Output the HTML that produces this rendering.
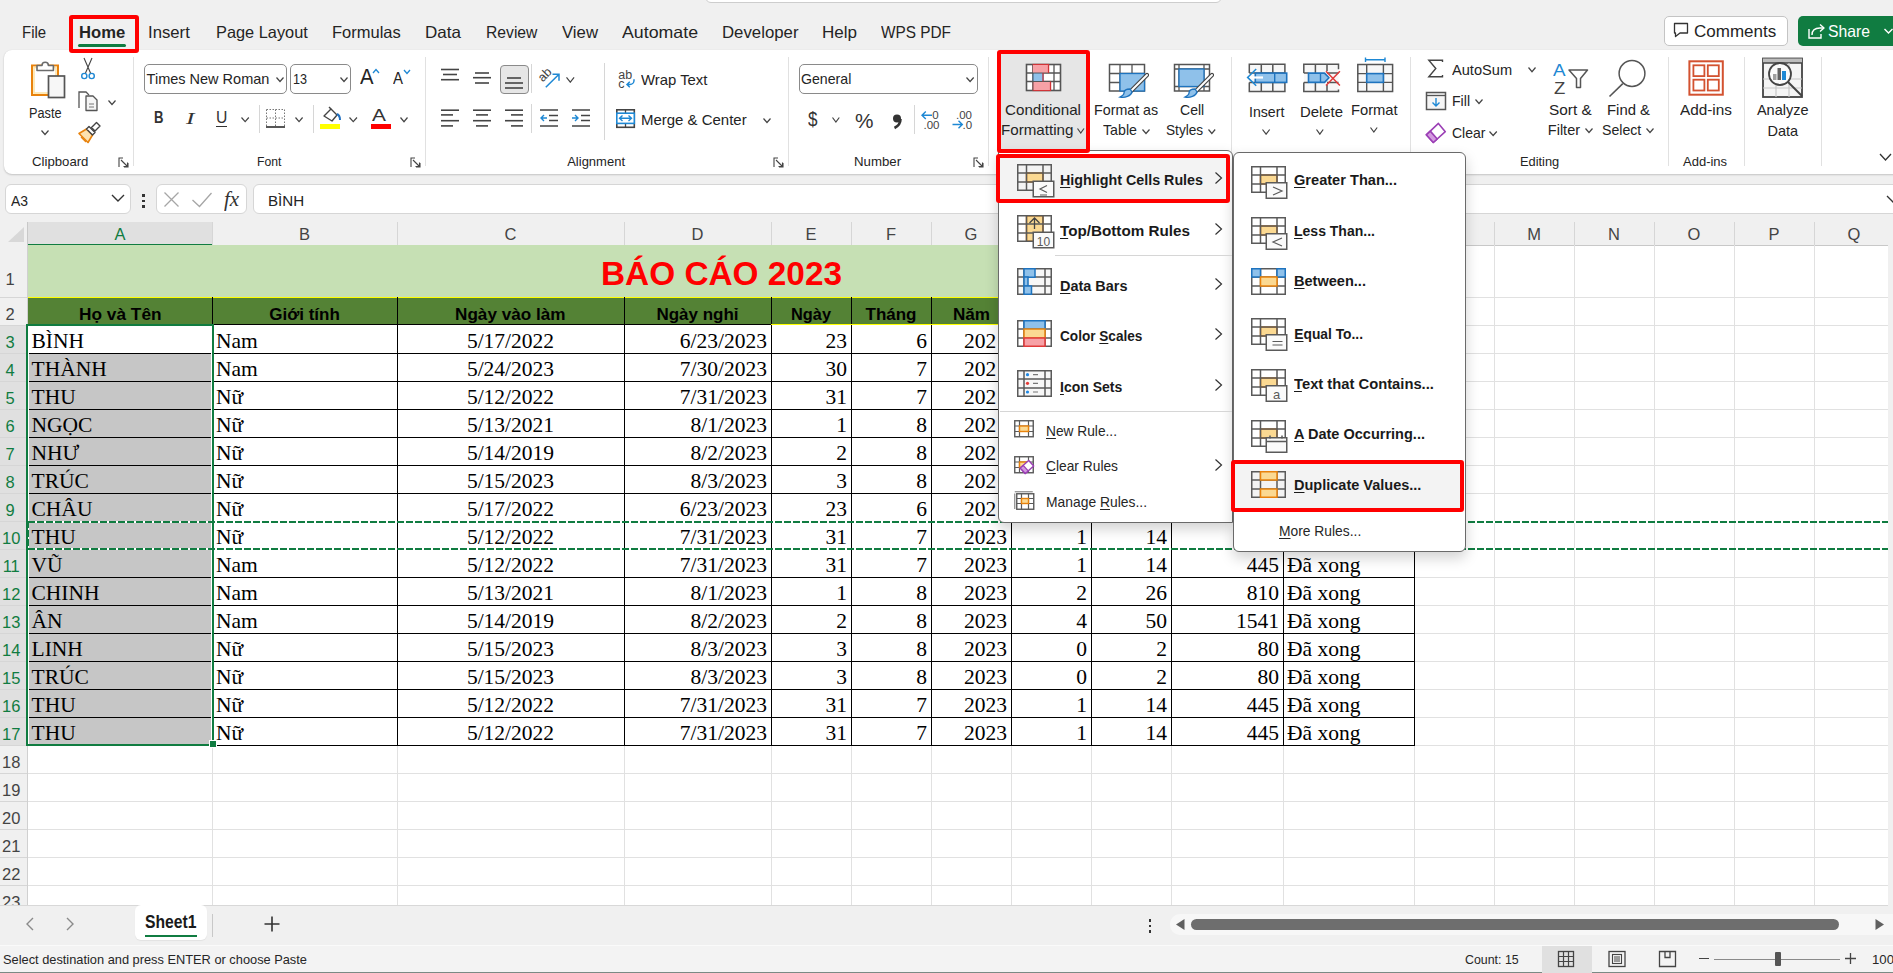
<!DOCTYPE html>
<html><head><meta charset="utf-8"><style>
html,body{margin:0;padding:0;}
body{width:1893px;height:973px;position:relative;overflow:hidden;background:#f0f0f0;font-family:"Liberation Sans",sans-serif;}
u{text-decoration:underline;text-underline-offset:2px;text-decoration-thickness:1px;}
</style></head><body>
<div style="position:absolute;left:0px;top:222px;width:1893px;height:683px;background:#ffffff;"></div>
<div style="position:absolute;left:0px;top:222px;width:1893px;height:23px;background:#f0f0f0;"></div>
<div style="position:absolute;left:0px;top:245px;width:1893px;height:1px;background:#c8c8c8;"></div>
<div style="position:absolute;left:27px;top:222px;width:1px;height:23px;background:#c8c8c8;"></div>
<div style="position:absolute;left:28px;top:222px;width:184px;height:23px;background:#e0e0e0;"></div>
<div style="position:absolute;left:28px;top:244px;width:184px;height:2px;background:#107c41;"></div>
<svg style="position:absolute;left:6px;top:226px;" width="18" height="16" viewBox="0 0 18 16"><path d="M18 1v15H2z" fill="#d8d8d8"/></svg>
<div style="position:absolute;top:225.97px;font-family:'Liberation Sans', sans-serif;font-size:16.5px;line-height:16.5px;color:#107c41;white-space:nowrap;left:114.50px;transform-origin:0 0;">A</div>
<div style="position:absolute;left:212px;top:222px;width:1px;height:23px;background:#d6d6d6;"></div>
<div style="position:absolute;top:225.97px;font-family:'Liberation Sans', sans-serif;font-size:16.5px;line-height:16.5px;color:#444;white-space:nowrap;left:299.00px;transform-origin:0 0;">B</div>
<div style="position:absolute;left:397px;top:222px;width:1px;height:23px;background:#d6d6d6;"></div>
<div style="position:absolute;top:225.97px;font-family:'Liberation Sans', sans-serif;font-size:16.5px;line-height:16.5px;color:#444;white-space:nowrap;left:504.55px;transform-origin:0 0;">C</div>
<div style="position:absolute;left:624px;top:222px;width:1px;height:23px;background:#d6d6d6;"></div>
<div style="position:absolute;top:225.97px;font-family:'Liberation Sans', sans-serif;font-size:16.5px;line-height:16.5px;color:#444;white-space:nowrap;left:691.55px;transform-origin:0 0;">D</div>
<div style="position:absolute;left:771px;top:222px;width:1px;height:23px;background:#d6d6d6;"></div>
<div style="position:absolute;top:225.97px;font-family:'Liberation Sans', sans-serif;font-size:16.5px;line-height:16.5px;color:#444;white-space:nowrap;left:805.50px;transform-origin:0 0;">E</div>
<div style="position:absolute;left:851px;top:222px;width:1px;height:23px;background:#d6d6d6;"></div>
<div style="position:absolute;top:225.97px;font-family:'Liberation Sans', sans-serif;font-size:16.5px;line-height:16.5px;color:#444;white-space:nowrap;left:885.95px;transform-origin:0 0;">F</div>
<div style="position:absolute;left:931px;top:222px;width:1px;height:23px;background:#d6d6d6;"></div>
<div style="position:absolute;top:225.97px;font-family:'Liberation Sans', sans-serif;font-size:16.5px;line-height:16.5px;color:#444;white-space:nowrap;left:964.60px;transform-origin:0 0;">G</div>
<div style="position:absolute;left:1011px;top:222px;width:1px;height:23px;background:#d6d6d6;"></div>
<div style="position:absolute;top:225.97px;font-family:'Liberation Sans', sans-serif;font-size:16.5px;line-height:16.5px;color:#444;white-space:nowrap;left:1045.05px;transform-origin:0 0;">H</div>
<div style="position:absolute;left:1091px;top:222px;width:1px;height:23px;background:#d6d6d6;"></div>
<div style="position:absolute;top:225.97px;font-family:'Liberation Sans', sans-serif;font-size:16.5px;line-height:16.5px;color:#444;white-space:nowrap;left:1128.70px;transform-origin:0 0;">I</div>
<div style="position:absolute;left:1171px;top:222px;width:1px;height:23px;background:#d6d6d6;"></div>
<div style="position:absolute;top:225.97px;font-family:'Liberation Sans', sans-serif;font-size:16.5px;line-height:16.5px;color:#444;white-space:nowrap;left:1222.85px;transform-origin:0 0;">J</div>
<div style="position:absolute;left:1283px;top:222px;width:1px;height:23px;background:#d6d6d6;"></div>
<div style="position:absolute;top:225.97px;font-family:'Liberation Sans', sans-serif;font-size:16.5px;line-height:16.5px;color:#444;white-space:nowrap;left:1343.00px;transform-origin:0 0;">K</div>
<div style="position:absolute;left:1414px;top:222px;width:1px;height:23px;background:#d6d6d6;"></div>
<div style="position:absolute;top:225.97px;font-family:'Liberation Sans', sans-serif;font-size:16.5px;line-height:16.5px;color:#444;white-space:nowrap;left:1449.40px;transform-origin:0 0;">L</div>
<div style="position:absolute;left:1494px;top:222px;width:1px;height:23px;background:#d6d6d6;"></div>
<div style="position:absolute;top:225.97px;font-family:'Liberation Sans', sans-serif;font-size:16.5px;line-height:16.5px;color:#444;white-space:nowrap;left:1527.15px;transform-origin:0 0;">M</div>
<div style="position:absolute;left:1574px;top:222px;width:1px;height:23px;background:#d6d6d6;"></div>
<div style="position:absolute;top:225.97px;font-family:'Liberation Sans', sans-serif;font-size:16.5px;line-height:16.5px;color:#444;white-space:nowrap;left:1608.05px;transform-origin:0 0;">N</div>
<div style="position:absolute;left:1654px;top:222px;width:1px;height:23px;background:#d6d6d6;"></div>
<div style="position:absolute;top:225.97px;font-family:'Liberation Sans', sans-serif;font-size:16.5px;line-height:16.5px;color:#444;white-space:nowrap;left:1687.60px;transform-origin:0 0;">O</div>
<div style="position:absolute;left:1734px;top:222px;width:1px;height:23px;background:#d6d6d6;"></div>
<div style="position:absolute;top:225.97px;font-family:'Liberation Sans', sans-serif;font-size:16.5px;line-height:16.5px;color:#444;white-space:nowrap;left:1768.50px;transform-origin:0 0;">P</div>
<div style="position:absolute;left:1814px;top:222px;width:1px;height:23px;background:#d6d6d6;"></div>
<div style="position:absolute;top:225.97px;font-family:'Liberation Sans', sans-serif;font-size:16.5px;line-height:16.5px;color:#444;white-space:nowrap;left:1847.60px;transform-origin:0 0;">Q</div>
<div style="position:absolute;left:0px;top:245px;width:27px;height:660px;background:#f0f0f0;"></div>
<div style="position:absolute;left:0px;top:325px;width:27px;height:420px;background:#e0e0e0;"></div>
<div style="position:absolute;left:27px;top:245px;width:1px;height:660px;background:#d0d0d0;"></div>
<div style="position:absolute;left:0px;top:297px;width:27px;height:1px;background:#d6d6d6;"></div>
<div style="position:absolute;top:271.48px;font-family:'Liberation Sans', sans-serif;font-size:16.5px;line-height:16.5px;color:#444;white-space:nowrap;left:5.60px;transform-origin:0 0;">1</div>
<div style="position:absolute;left:0px;top:325px;width:27px;height:1px;background:#d6d6d6;"></div>
<div style="position:absolute;top:305.98px;font-family:'Liberation Sans', sans-serif;font-size:16.5px;line-height:16.5px;color:#444;white-space:nowrap;left:5.60px;transform-origin:0 0;">2</div>
<div style="position:absolute;left:0px;top:353px;width:27px;height:1px;background:#d6d6d6;"></div>
<div style="position:absolute;top:333.98px;font-family:'Liberation Sans', sans-serif;font-size:16.5px;line-height:16.5px;color:#107c41;white-space:nowrap;left:5.60px;transform-origin:0 0;">3</div>
<div style="position:absolute;left:0px;top:381px;width:27px;height:1px;background:#d6d6d6;"></div>
<div style="position:absolute;top:361.98px;font-family:'Liberation Sans', sans-serif;font-size:16.5px;line-height:16.5px;color:#107c41;white-space:nowrap;left:5.60px;transform-origin:0 0;">4</div>
<div style="position:absolute;left:0px;top:409px;width:27px;height:1px;background:#d6d6d6;"></div>
<div style="position:absolute;top:389.98px;font-family:'Liberation Sans', sans-serif;font-size:16.5px;line-height:16.5px;color:#107c41;white-space:nowrap;left:5.60px;transform-origin:0 0;">5</div>
<div style="position:absolute;left:0px;top:437px;width:27px;height:1px;background:#d6d6d6;"></div>
<div style="position:absolute;top:417.98px;font-family:'Liberation Sans', sans-serif;font-size:16.5px;line-height:16.5px;color:#107c41;white-space:nowrap;left:5.60px;transform-origin:0 0;">6</div>
<div style="position:absolute;left:0px;top:465px;width:27px;height:1px;background:#d6d6d6;"></div>
<div style="position:absolute;top:445.98px;font-family:'Liberation Sans', sans-serif;font-size:16.5px;line-height:16.5px;color:#107c41;white-space:nowrap;left:5.60px;transform-origin:0 0;">7</div>
<div style="position:absolute;left:0px;top:493px;width:27px;height:1px;background:#d6d6d6;"></div>
<div style="position:absolute;top:473.98px;font-family:'Liberation Sans', sans-serif;font-size:16.5px;line-height:16.5px;color:#107c41;white-space:nowrap;left:5.60px;transform-origin:0 0;">8</div>
<div style="position:absolute;left:0px;top:521px;width:27px;height:1px;background:#d6d6d6;"></div>
<div style="position:absolute;top:501.98px;font-family:'Liberation Sans', sans-serif;font-size:16.5px;line-height:16.5px;color:#107c41;white-space:nowrap;left:5.60px;transform-origin:0 0;">9</div>
<div style="position:absolute;left:0px;top:549px;width:27px;height:1px;background:#d6d6d6;"></div>
<div style="position:absolute;top:529.98px;font-family:'Liberation Sans', sans-serif;font-size:16.5px;line-height:16.5px;color:#107c41;white-space:nowrap;left:2.00px;transform-origin:0 0;">10</div>
<div style="position:absolute;left:0px;top:577px;width:27px;height:1px;background:#d6d6d6;"></div>
<div style="position:absolute;top:557.98px;font-family:'Liberation Sans', sans-serif;font-size:16.5px;line-height:16.5px;color:#107c41;white-space:nowrap;left:2.65px;transform-origin:0 0;">11</div>
<div style="position:absolute;left:0px;top:605px;width:27px;height:1px;background:#d6d6d6;"></div>
<div style="position:absolute;top:585.98px;font-family:'Liberation Sans', sans-serif;font-size:16.5px;line-height:16.5px;color:#107c41;white-space:nowrap;left:2.00px;transform-origin:0 0;">12</div>
<div style="position:absolute;left:0px;top:633px;width:27px;height:1px;background:#d6d6d6;"></div>
<div style="position:absolute;top:613.98px;font-family:'Liberation Sans', sans-serif;font-size:16.5px;line-height:16.5px;color:#107c41;white-space:nowrap;left:2.00px;transform-origin:0 0;">13</div>
<div style="position:absolute;left:0px;top:661px;width:27px;height:1px;background:#d6d6d6;"></div>
<div style="position:absolute;top:641.98px;font-family:'Liberation Sans', sans-serif;font-size:16.5px;line-height:16.5px;color:#107c41;white-space:nowrap;left:2.00px;transform-origin:0 0;">14</div>
<div style="position:absolute;left:0px;top:689px;width:27px;height:1px;background:#d6d6d6;"></div>
<div style="position:absolute;top:669.98px;font-family:'Liberation Sans', sans-serif;font-size:16.5px;line-height:16.5px;color:#107c41;white-space:nowrap;left:2.00px;transform-origin:0 0;">15</div>
<div style="position:absolute;left:0px;top:717px;width:27px;height:1px;background:#d6d6d6;"></div>
<div style="position:absolute;top:697.98px;font-family:'Liberation Sans', sans-serif;font-size:16.5px;line-height:16.5px;color:#107c41;white-space:nowrap;left:2.00px;transform-origin:0 0;">16</div>
<div style="position:absolute;left:0px;top:745px;width:27px;height:1px;background:#d6d6d6;"></div>
<div style="position:absolute;top:725.98px;font-family:'Liberation Sans', sans-serif;font-size:16.5px;line-height:16.5px;color:#107c41;white-space:nowrap;left:2.00px;transform-origin:0 0;">17</div>
<div style="position:absolute;left:0px;top:773px;width:27px;height:1px;background:#d6d6d6;"></div>
<div style="position:absolute;top:753.98px;font-family:'Liberation Sans', sans-serif;font-size:16.5px;line-height:16.5px;color:#444;white-space:nowrap;left:2.00px;transform-origin:0 0;">18</div>
<div style="position:absolute;left:0px;top:801px;width:27px;height:1px;background:#d6d6d6;"></div>
<div style="position:absolute;top:781.98px;font-family:'Liberation Sans', sans-serif;font-size:16.5px;line-height:16.5px;color:#444;white-space:nowrap;left:2.00px;transform-origin:0 0;">19</div>
<div style="position:absolute;left:0px;top:829px;width:27px;height:1px;background:#d6d6d6;"></div>
<div style="position:absolute;top:809.98px;font-family:'Liberation Sans', sans-serif;font-size:16.5px;line-height:16.5px;color:#444;white-space:nowrap;left:2.00px;transform-origin:0 0;">20</div>
<div style="position:absolute;left:0px;top:857px;width:27px;height:1px;background:#d6d6d6;"></div>
<div style="position:absolute;top:837.98px;font-family:'Liberation Sans', sans-serif;font-size:16.5px;line-height:16.5px;color:#444;white-space:nowrap;left:2.00px;transform-origin:0 0;">21</div>
<div style="position:absolute;left:0px;top:885px;width:27px;height:1px;background:#d6d6d6;"></div>
<div style="position:absolute;top:865.98px;font-family:'Liberation Sans', sans-serif;font-size:16.5px;line-height:16.5px;color:#444;white-space:nowrap;left:2.00px;transform-origin:0 0;">22</div>
<div style="position:absolute;left:0px;top:913px;width:27px;height:1px;background:#d6d6d6;"></div>
<div style="position:absolute;top:893.98px;font-family:'Liberation Sans', sans-serif;font-size:16.5px;line-height:16.5px;color:#444;white-space:nowrap;left:2.00px;transform-origin:0 0;">23</div>
<div style="position:absolute;left:212px;top:245px;width:1px;height:660px;background:#e1e1e1;"></div>
<div style="position:absolute;left:397px;top:245px;width:1px;height:660px;background:#e1e1e1;"></div>
<div style="position:absolute;left:624px;top:245px;width:1px;height:660px;background:#e1e1e1;"></div>
<div style="position:absolute;left:771px;top:245px;width:1px;height:660px;background:#e1e1e1;"></div>
<div style="position:absolute;left:851px;top:245px;width:1px;height:660px;background:#e1e1e1;"></div>
<div style="position:absolute;left:931px;top:245px;width:1px;height:660px;background:#e1e1e1;"></div>
<div style="position:absolute;left:1011px;top:245px;width:1px;height:660px;background:#e1e1e1;"></div>
<div style="position:absolute;left:1091px;top:245px;width:1px;height:660px;background:#e1e1e1;"></div>
<div style="position:absolute;left:1171px;top:245px;width:1px;height:660px;background:#e1e1e1;"></div>
<div style="position:absolute;left:1283px;top:245px;width:1px;height:660px;background:#e1e1e1;"></div>
<div style="position:absolute;left:1414px;top:245px;width:1px;height:660px;background:#e1e1e1;"></div>
<div style="position:absolute;left:1494px;top:245px;width:1px;height:660px;background:#e1e1e1;"></div>
<div style="position:absolute;left:1574px;top:245px;width:1px;height:660px;background:#e1e1e1;"></div>
<div style="position:absolute;left:1654px;top:245px;width:1px;height:660px;background:#e1e1e1;"></div>
<div style="position:absolute;left:1734px;top:245px;width:1px;height:660px;background:#e1e1e1;"></div>
<div style="position:absolute;left:1814px;top:245px;width:1px;height:660px;background:#e1e1e1;"></div>
<div style="position:absolute;left:1894px;top:245px;width:1px;height:660px;background:#e1e1e1;"></div>
<div style="position:absolute;left:28px;top:297px;width:1866px;height:1px;background:#e1e1e1;"></div>
<div style="position:absolute;left:28px;top:325px;width:1866px;height:1px;background:#e1e1e1;"></div>
<div style="position:absolute;left:28px;top:353px;width:1866px;height:1px;background:#e1e1e1;"></div>
<div style="position:absolute;left:28px;top:381px;width:1866px;height:1px;background:#e1e1e1;"></div>
<div style="position:absolute;left:28px;top:409px;width:1866px;height:1px;background:#e1e1e1;"></div>
<div style="position:absolute;left:28px;top:437px;width:1866px;height:1px;background:#e1e1e1;"></div>
<div style="position:absolute;left:28px;top:465px;width:1866px;height:1px;background:#e1e1e1;"></div>
<div style="position:absolute;left:28px;top:493px;width:1866px;height:1px;background:#e1e1e1;"></div>
<div style="position:absolute;left:28px;top:521px;width:1866px;height:1px;background:#e1e1e1;"></div>
<div style="position:absolute;left:28px;top:549px;width:1866px;height:1px;background:#e1e1e1;"></div>
<div style="position:absolute;left:28px;top:577px;width:1866px;height:1px;background:#e1e1e1;"></div>
<div style="position:absolute;left:28px;top:605px;width:1866px;height:1px;background:#e1e1e1;"></div>
<div style="position:absolute;left:28px;top:633px;width:1866px;height:1px;background:#e1e1e1;"></div>
<div style="position:absolute;left:28px;top:661px;width:1866px;height:1px;background:#e1e1e1;"></div>
<div style="position:absolute;left:28px;top:689px;width:1866px;height:1px;background:#e1e1e1;"></div>
<div style="position:absolute;left:28px;top:717px;width:1866px;height:1px;background:#e1e1e1;"></div>
<div style="position:absolute;left:28px;top:745px;width:1866px;height:1px;background:#e1e1e1;"></div>
<div style="position:absolute;left:28px;top:773px;width:1866px;height:1px;background:#e1e1e1;"></div>
<div style="position:absolute;left:28px;top:801px;width:1866px;height:1px;background:#e1e1e1;"></div>
<div style="position:absolute;left:28px;top:829px;width:1866px;height:1px;background:#e1e1e1;"></div>
<div style="position:absolute;left:28px;top:857px;width:1866px;height:1px;background:#e1e1e1;"></div>
<div style="position:absolute;left:28px;top:885px;width:1866px;height:1px;background:#e1e1e1;"></div>
<div style="position:absolute;left:28px;top:245px;width:1386px;height:52px;background:#c6e0b4;"></div>
<div style="position:absolute;top:256.85px;font-family:'Liberation Sans', sans-serif;font-size:33px;line-height:33px;font-weight:bold;color:#ff0000;white-space:nowrap;left:601.00px;transform-origin:0 0;transform:scaleX(1.0109);">BÁO CÁO 2023</div>
<div style="position:absolute;left:28px;top:297px;width:1386px;height:28px;background:#548235;"></div>
<div style="position:absolute;left:28px;top:297px;width:1386px;height:1px;background:#ffff00;"></div>
<div style="position:absolute;top:306.05px;font-family:'Liberation Sans', sans-serif;font-size:17px;line-height:17px;font-weight:bold;color:#000;white-space:nowrap;left:78.75px;transform-origin:0 0;transform:scaleX(1.0160);">Họ và Tên</div>
<div style="position:absolute;top:306.05px;font-family:'Liberation Sans', sans-serif;font-size:17px;line-height:17px;font-weight:bold;color:#000;white-space:nowrap;left:269.20px;transform-origin:0 0;">Giới tính</div>
<div style="position:absolute;top:306.05px;font-family:'Liberation Sans', sans-serif;font-size:17px;line-height:17px;font-weight:bold;color:#000;white-space:nowrap;left:455.25px;transform-origin:0 0;transform:scaleX(1.0082);">Ngày vào làm</div>
<div style="position:absolute;top:306.05px;font-family:'Liberation Sans', sans-serif;font-size:17px;line-height:17px;font-weight:bold;color:#000;white-space:nowrap;left:656.40px;transform-origin:0 0;">Ngày nghỉ</div>
<div style="position:absolute;top:306.05px;font-family:'Liberation Sans', sans-serif;font-size:17px;line-height:17px;font-weight:bold;color:#000;white-space:nowrap;left:791.00px;transform-origin:0 0;transform:scaleX(0.9615);">Ngày</div>
<div style="position:absolute;top:306.05px;font-family:'Liberation Sans', sans-serif;font-size:17px;line-height:17px;font-weight:bold;color:#000;white-space:nowrap;left:865.50px;transform-origin:0 0;">Tháng</div>
<div style="position:absolute;top:306.05px;font-family:'Liberation Sans', sans-serif;font-size:17px;line-height:17px;font-weight:bold;color:#000;white-space:nowrap;left:952.50px;transform-origin:0 0;transform:scaleX(1.0054);">Năm</div>
<div style="position:absolute;top:306.05px;font-family:'Liberation Sans', sans-serif;font-size:17px;line-height:17px;font-weight:bold;color:#000;white-space:nowrap;left:1030.20px;transform-origin:0 0;">Ngày</div>
<div style="position:absolute;top:306.05px;font-family:'Liberation Sans', sans-serif;font-size:17px;line-height:17px;font-weight:bold;color:#000;white-space:nowrap;left:1111.35px;transform-origin:0 0;">Tuần</div>
<div style="position:absolute;top:306.05px;font-family:'Liberation Sans', sans-serif;font-size:17px;line-height:17px;font-weight:bold;color:#000;white-space:nowrap;left:1199.25px;transform-origin:0 0;">Lương</div>
<div style="position:absolute;top:306.05px;font-family:'Liberation Sans', sans-serif;font-size:17px;line-height:17px;font-weight:bold;color:#000;white-space:nowrap;left:1316.85px;transform-origin:0 0;">Ghi chú</div>
<div style="position:absolute;left:28px;top:325px;width:1386px;height:420px;background:#ffffff;"></div>
<div style="position:absolute;left:29px;top:353px;width:182px;height:392px;background:#c6c6c6;"></div>
<div style="position:absolute;left:212px;top:297px;width:1px;height:448px;background:#000;"></div>
<div style="position:absolute;left:397px;top:297px;width:1px;height:448px;background:#000;"></div>
<div style="position:absolute;left:624px;top:297px;width:1px;height:448px;background:#000;"></div>
<div style="position:absolute;left:771px;top:297px;width:1px;height:448px;background:#000;"></div>
<div style="position:absolute;left:851px;top:297px;width:1px;height:448px;background:#000;"></div>
<div style="position:absolute;left:931px;top:297px;width:1px;height:448px;background:#000;"></div>
<div style="position:absolute;left:1011px;top:297px;width:1px;height:448px;background:#000;"></div>
<div style="position:absolute;left:1091px;top:297px;width:1px;height:448px;background:#000;"></div>
<div style="position:absolute;left:1171px;top:297px;width:1px;height:448px;background:#000;"></div>
<div style="position:absolute;left:1283px;top:297px;width:1px;height:448px;background:#000;"></div>
<div style="position:absolute;left:1414px;top:297px;width:1px;height:449px;background:#000;"></div>
<div style="position:absolute;left:28px;top:353px;width:1387px;height:1px;background:#000;"></div>
<div style="position:absolute;left:28px;top:381px;width:1387px;height:1px;background:#000;"></div>
<div style="position:absolute;left:28px;top:409px;width:1387px;height:1px;background:#000;"></div>
<div style="position:absolute;left:28px;top:437px;width:1387px;height:1px;background:#000;"></div>
<div style="position:absolute;left:28px;top:465px;width:1387px;height:1px;background:#000;"></div>
<div style="position:absolute;left:28px;top:493px;width:1387px;height:1px;background:#000;"></div>
<div style="position:absolute;left:28px;top:521px;width:1387px;height:1px;background:#000;"></div>
<div style="position:absolute;left:28px;top:549px;width:1387px;height:1px;background:#000;"></div>
<div style="position:absolute;left:28px;top:577px;width:1387px;height:1px;background:#000;"></div>
<div style="position:absolute;left:28px;top:605px;width:1387px;height:1px;background:#000;"></div>
<div style="position:absolute;left:28px;top:633px;width:1387px;height:1px;background:#000;"></div>
<div style="position:absolute;left:28px;top:661px;width:1387px;height:1px;background:#000;"></div>
<div style="position:absolute;left:28px;top:689px;width:1387px;height:1px;background:#000;"></div>
<div style="position:absolute;left:28px;top:717px;width:1387px;height:1px;background:#000;"></div>
<div style="position:absolute;left:28px;top:745px;width:1387px;height:1px;background:#000;"></div>
<div style="position:absolute;left:28px;top:324px;width:743px;height:1px;background:#000;"></div>
<div style="position:absolute;left:771px;top:324px;width:643px;height:1px;background:#ffff00;"></div>
<div style="position:absolute;top:330.96px;font-family:'Liberation Serif', serif;font-size:21.5px;line-height:21.5px;color:#000;white-space:nowrap;left:31.50px;transform-origin:0 0;">BÌNH</div>
<div style="position:absolute;top:330.96px;font-family:'Liberation Serif', serif;font-size:21.5px;line-height:21.5px;color:#000;white-space:nowrap;left:216.00px;transform-origin:0 0;">Nam</div>
<div style="position:absolute;top:330.96px;font-family:'Liberation Serif', serif;font-size:21.5px;line-height:21.5px;color:#000;white-space:nowrap;left:466.90px;transform-origin:0 0;">5/17/2022</div>
<div style="position:absolute;top:330.96px;font-family:'Liberation Serif', serif;font-size:21.5px;line-height:21.5px;color:#000;white-space:nowrap;right:1126.00px;transform-origin:100% 0;">6/23/2023</div>
<div style="position:absolute;top:330.96px;font-family:'Liberation Serif', serif;font-size:21.5px;line-height:21.5px;color:#000;white-space:nowrap;right:1046.00px;transform-origin:100% 0;">23</div>
<div style="position:absolute;top:330.96px;font-family:'Liberation Serif', serif;font-size:21.5px;line-height:21.5px;color:#000;white-space:nowrap;right:966.05px;transform-origin:100% 0;">6</div>
<div style="position:absolute;top:330.96px;font-family:'Liberation Serif', serif;font-size:21.5px;line-height:21.5px;color:#000;white-space:nowrap;right:886.00px;transform-origin:100% 0;">2023</div>
<div style="position:absolute;top:358.96px;font-family:'Liberation Serif', serif;font-size:21.5px;line-height:21.5px;color:#000;white-space:nowrap;left:31.50px;transform-origin:0 0;">THÀNH</div>
<div style="position:absolute;top:358.96px;font-family:'Liberation Serif', serif;font-size:21.5px;line-height:21.5px;color:#000;white-space:nowrap;left:216.00px;transform-origin:0 0;">Nam</div>
<div style="position:absolute;top:358.96px;font-family:'Liberation Serif', serif;font-size:21.5px;line-height:21.5px;color:#000;white-space:nowrap;left:466.90px;transform-origin:0 0;">5/24/2023</div>
<div style="position:absolute;top:358.96px;font-family:'Liberation Serif', serif;font-size:21.5px;line-height:21.5px;color:#000;white-space:nowrap;right:1126.00px;transform-origin:100% 0;">7/30/2023</div>
<div style="position:absolute;top:358.96px;font-family:'Liberation Serif', serif;font-size:21.5px;line-height:21.5px;color:#000;white-space:nowrap;right:1046.00px;transform-origin:100% 0;">30</div>
<div style="position:absolute;top:358.96px;font-family:'Liberation Serif', serif;font-size:21.5px;line-height:21.5px;color:#000;white-space:nowrap;right:966.05px;transform-origin:100% 0;">7</div>
<div style="position:absolute;top:358.96px;font-family:'Liberation Serif', serif;font-size:21.5px;line-height:21.5px;color:#000;white-space:nowrap;right:886.00px;transform-origin:100% 0;">2023</div>
<div style="position:absolute;top:386.96px;font-family:'Liberation Serif', serif;font-size:21.5px;line-height:21.5px;color:#000;white-space:nowrap;left:31.50px;transform-origin:0 0;">THU</div>
<div style="position:absolute;top:386.96px;font-family:'Liberation Serif', serif;font-size:21.5px;line-height:21.5px;color:#000;white-space:nowrap;left:216.00px;transform-origin:0 0;">Nữ</div>
<div style="position:absolute;top:386.96px;font-family:'Liberation Serif', serif;font-size:21.5px;line-height:21.5px;color:#000;white-space:nowrap;left:466.90px;transform-origin:0 0;">5/12/2022</div>
<div style="position:absolute;top:386.96px;font-family:'Liberation Serif', serif;font-size:21.5px;line-height:21.5px;color:#000;white-space:nowrap;right:1126.00px;transform-origin:100% 0;">7/31/2023</div>
<div style="position:absolute;top:386.96px;font-family:'Liberation Serif', serif;font-size:21.5px;line-height:21.5px;color:#000;white-space:nowrap;right:1046.00px;transform-origin:100% 0;">31</div>
<div style="position:absolute;top:386.96px;font-family:'Liberation Serif', serif;font-size:21.5px;line-height:21.5px;color:#000;white-space:nowrap;right:966.05px;transform-origin:100% 0;">7</div>
<div style="position:absolute;top:386.96px;font-family:'Liberation Serif', serif;font-size:21.5px;line-height:21.5px;color:#000;white-space:nowrap;right:886.00px;transform-origin:100% 0;">2023</div>
<div style="position:absolute;top:414.96px;font-family:'Liberation Serif', serif;font-size:21.5px;line-height:21.5px;color:#000;white-space:nowrap;left:31.50px;transform-origin:0 0;">NGỌC</div>
<div style="position:absolute;top:414.96px;font-family:'Liberation Serif', serif;font-size:21.5px;line-height:21.5px;color:#000;white-space:nowrap;left:216.00px;transform-origin:0 0;">Nữ</div>
<div style="position:absolute;top:414.96px;font-family:'Liberation Serif', serif;font-size:21.5px;line-height:21.5px;color:#000;white-space:nowrap;left:466.90px;transform-origin:0 0;">5/13/2021</div>
<div style="position:absolute;top:414.96px;font-family:'Liberation Serif', serif;font-size:21.5px;line-height:21.5px;color:#000;white-space:nowrap;right:1125.95px;transform-origin:100% 0;">8/1/2023</div>
<div style="position:absolute;top:414.96px;font-family:'Liberation Serif', serif;font-size:21.5px;line-height:21.5px;color:#000;white-space:nowrap;right:1046.05px;transform-origin:100% 0;">1</div>
<div style="position:absolute;top:414.96px;font-family:'Liberation Serif', serif;font-size:21.5px;line-height:21.5px;color:#000;white-space:nowrap;right:966.05px;transform-origin:100% 0;">8</div>
<div style="position:absolute;top:414.96px;font-family:'Liberation Serif', serif;font-size:21.5px;line-height:21.5px;color:#000;white-space:nowrap;right:886.00px;transform-origin:100% 0;">2023</div>
<div style="position:absolute;top:442.96px;font-family:'Liberation Serif', serif;font-size:21.5px;line-height:21.5px;color:#000;white-space:nowrap;left:31.50px;transform-origin:0 0;">NHƯ</div>
<div style="position:absolute;top:442.96px;font-family:'Liberation Serif', serif;font-size:21.5px;line-height:21.5px;color:#000;white-space:nowrap;left:216.00px;transform-origin:0 0;">Nữ</div>
<div style="position:absolute;top:442.96px;font-family:'Liberation Serif', serif;font-size:21.5px;line-height:21.5px;color:#000;white-space:nowrap;left:466.90px;transform-origin:0 0;">5/14/2019</div>
<div style="position:absolute;top:442.96px;font-family:'Liberation Serif', serif;font-size:21.5px;line-height:21.5px;color:#000;white-space:nowrap;right:1125.95px;transform-origin:100% 0;">8/2/2023</div>
<div style="position:absolute;top:442.96px;font-family:'Liberation Serif', serif;font-size:21.5px;line-height:21.5px;color:#000;white-space:nowrap;right:1046.05px;transform-origin:100% 0;">2</div>
<div style="position:absolute;top:442.96px;font-family:'Liberation Serif', serif;font-size:21.5px;line-height:21.5px;color:#000;white-space:nowrap;right:966.05px;transform-origin:100% 0;">8</div>
<div style="position:absolute;top:442.96px;font-family:'Liberation Serif', serif;font-size:21.5px;line-height:21.5px;color:#000;white-space:nowrap;right:886.00px;transform-origin:100% 0;">2023</div>
<div style="position:absolute;top:470.96px;font-family:'Liberation Serif', serif;font-size:21.5px;line-height:21.5px;color:#000;white-space:nowrap;left:31.50px;transform-origin:0 0;">TRÚC</div>
<div style="position:absolute;top:470.96px;font-family:'Liberation Serif', serif;font-size:21.5px;line-height:21.5px;color:#000;white-space:nowrap;left:216.00px;transform-origin:0 0;">Nữ</div>
<div style="position:absolute;top:470.96px;font-family:'Liberation Serif', serif;font-size:21.5px;line-height:21.5px;color:#000;white-space:nowrap;left:466.90px;transform-origin:0 0;">5/15/2023</div>
<div style="position:absolute;top:470.96px;font-family:'Liberation Serif', serif;font-size:21.5px;line-height:21.5px;color:#000;white-space:nowrap;right:1125.95px;transform-origin:100% 0;">8/3/2023</div>
<div style="position:absolute;top:470.96px;font-family:'Liberation Serif', serif;font-size:21.5px;line-height:21.5px;color:#000;white-space:nowrap;right:1046.05px;transform-origin:100% 0;">3</div>
<div style="position:absolute;top:470.96px;font-family:'Liberation Serif', serif;font-size:21.5px;line-height:21.5px;color:#000;white-space:nowrap;right:966.05px;transform-origin:100% 0;">8</div>
<div style="position:absolute;top:470.96px;font-family:'Liberation Serif', serif;font-size:21.5px;line-height:21.5px;color:#000;white-space:nowrap;right:886.00px;transform-origin:100% 0;">2023</div>
<div style="position:absolute;top:498.95px;font-family:'Liberation Serif', serif;font-size:21.5px;line-height:21.5px;color:#000;white-space:nowrap;left:31.50px;transform-origin:0 0;">CHÂU</div>
<div style="position:absolute;top:498.95px;font-family:'Liberation Serif', serif;font-size:21.5px;line-height:21.5px;color:#000;white-space:nowrap;left:216.00px;transform-origin:0 0;">Nữ</div>
<div style="position:absolute;top:498.95px;font-family:'Liberation Serif', serif;font-size:21.5px;line-height:21.5px;color:#000;white-space:nowrap;left:466.90px;transform-origin:0 0;">5/17/2022</div>
<div style="position:absolute;top:498.95px;font-family:'Liberation Serif', serif;font-size:21.5px;line-height:21.5px;color:#000;white-space:nowrap;right:1126.00px;transform-origin:100% 0;">6/23/2023</div>
<div style="position:absolute;top:498.95px;font-family:'Liberation Serif', serif;font-size:21.5px;line-height:21.5px;color:#000;white-space:nowrap;right:1046.00px;transform-origin:100% 0;">23</div>
<div style="position:absolute;top:498.95px;font-family:'Liberation Serif', serif;font-size:21.5px;line-height:21.5px;color:#000;white-space:nowrap;right:966.05px;transform-origin:100% 0;">6</div>
<div style="position:absolute;top:498.95px;font-family:'Liberation Serif', serif;font-size:21.5px;line-height:21.5px;color:#000;white-space:nowrap;right:886.00px;transform-origin:100% 0;">2023</div>
<div style="position:absolute;top:526.95px;font-family:'Liberation Serif', serif;font-size:21.5px;line-height:21.5px;color:#000;white-space:nowrap;left:31.50px;transform-origin:0 0;">THU</div>
<div style="position:absolute;top:526.95px;font-family:'Liberation Serif', serif;font-size:21.5px;line-height:21.5px;color:#000;white-space:nowrap;left:216.00px;transform-origin:0 0;">Nữ</div>
<div style="position:absolute;top:526.95px;font-family:'Liberation Serif', serif;font-size:21.5px;line-height:21.5px;color:#000;white-space:nowrap;left:466.90px;transform-origin:0 0;">5/12/2022</div>
<div style="position:absolute;top:526.95px;font-family:'Liberation Serif', serif;font-size:21.5px;line-height:21.5px;color:#000;white-space:nowrap;right:1126.00px;transform-origin:100% 0;">7/31/2023</div>
<div style="position:absolute;top:526.95px;font-family:'Liberation Serif', serif;font-size:21.5px;line-height:21.5px;color:#000;white-space:nowrap;right:1046.00px;transform-origin:100% 0;">31</div>
<div style="position:absolute;top:526.95px;font-family:'Liberation Serif', serif;font-size:21.5px;line-height:21.5px;color:#000;white-space:nowrap;right:966.05px;transform-origin:100% 0;">7</div>
<div style="position:absolute;top:526.95px;font-family:'Liberation Serif', serif;font-size:21.5px;line-height:21.5px;color:#000;white-space:nowrap;right:886.00px;transform-origin:100% 0;">2023</div>
<div style="position:absolute;top:526.95px;font-family:'Liberation Serif', serif;font-size:21.5px;line-height:21.5px;color:#000;white-space:nowrap;right:806.05px;transform-origin:100% 0;">1</div>
<div style="position:absolute;top:526.95px;font-family:'Liberation Serif', serif;font-size:21.5px;line-height:21.5px;color:#000;white-space:nowrap;right:726.00px;transform-origin:100% 0;">14</div>
<div style="position:absolute;top:526.95px;font-family:'Liberation Serif', serif;font-size:21.5px;line-height:21.5px;color:#000;white-space:nowrap;right:614.05px;transform-origin:100% 0;">445</div>
<div style="position:absolute;top:526.95px;font-family:'Liberation Serif', serif;font-size:21.5px;line-height:21.5px;color:#000;white-space:nowrap;left:1287.00px;transform-origin:0 0;">Đã xong</div>
<div style="position:absolute;top:554.95px;font-family:'Liberation Serif', serif;font-size:21.5px;line-height:21.5px;color:#000;white-space:nowrap;left:31.50px;transform-origin:0 0;">VŨ</div>
<div style="position:absolute;top:554.95px;font-family:'Liberation Serif', serif;font-size:21.5px;line-height:21.5px;color:#000;white-space:nowrap;left:216.00px;transform-origin:0 0;">Nam</div>
<div style="position:absolute;top:554.95px;font-family:'Liberation Serif', serif;font-size:21.5px;line-height:21.5px;color:#000;white-space:nowrap;left:466.90px;transform-origin:0 0;">5/12/2022</div>
<div style="position:absolute;top:554.95px;font-family:'Liberation Serif', serif;font-size:21.5px;line-height:21.5px;color:#000;white-space:nowrap;right:1126.00px;transform-origin:100% 0;">7/31/2023</div>
<div style="position:absolute;top:554.95px;font-family:'Liberation Serif', serif;font-size:21.5px;line-height:21.5px;color:#000;white-space:nowrap;right:1046.00px;transform-origin:100% 0;">31</div>
<div style="position:absolute;top:554.95px;font-family:'Liberation Serif', serif;font-size:21.5px;line-height:21.5px;color:#000;white-space:nowrap;right:966.05px;transform-origin:100% 0;">7</div>
<div style="position:absolute;top:554.95px;font-family:'Liberation Serif', serif;font-size:21.5px;line-height:21.5px;color:#000;white-space:nowrap;right:886.00px;transform-origin:100% 0;">2023</div>
<div style="position:absolute;top:554.95px;font-family:'Liberation Serif', serif;font-size:21.5px;line-height:21.5px;color:#000;white-space:nowrap;right:806.05px;transform-origin:100% 0;">1</div>
<div style="position:absolute;top:554.95px;font-family:'Liberation Serif', serif;font-size:21.5px;line-height:21.5px;color:#000;white-space:nowrap;right:726.00px;transform-origin:100% 0;">14</div>
<div style="position:absolute;top:554.95px;font-family:'Liberation Serif', serif;font-size:21.5px;line-height:21.5px;color:#000;white-space:nowrap;right:614.05px;transform-origin:100% 0;">445</div>
<div style="position:absolute;top:554.95px;font-family:'Liberation Serif', serif;font-size:21.5px;line-height:21.5px;color:#000;white-space:nowrap;left:1287.00px;transform-origin:0 0;">Đã xong</div>
<div style="position:absolute;top:582.95px;font-family:'Liberation Serif', serif;font-size:21.5px;line-height:21.5px;color:#000;white-space:nowrap;left:31.50px;transform-origin:0 0;">CHINH</div>
<div style="position:absolute;top:582.95px;font-family:'Liberation Serif', serif;font-size:21.5px;line-height:21.5px;color:#000;white-space:nowrap;left:216.00px;transform-origin:0 0;">Nam</div>
<div style="position:absolute;top:582.95px;font-family:'Liberation Serif', serif;font-size:21.5px;line-height:21.5px;color:#000;white-space:nowrap;left:466.90px;transform-origin:0 0;">5/13/2021</div>
<div style="position:absolute;top:582.95px;font-family:'Liberation Serif', serif;font-size:21.5px;line-height:21.5px;color:#000;white-space:nowrap;right:1125.95px;transform-origin:100% 0;">8/1/2023</div>
<div style="position:absolute;top:582.95px;font-family:'Liberation Serif', serif;font-size:21.5px;line-height:21.5px;color:#000;white-space:nowrap;right:1046.05px;transform-origin:100% 0;">1</div>
<div style="position:absolute;top:582.95px;font-family:'Liberation Serif', serif;font-size:21.5px;line-height:21.5px;color:#000;white-space:nowrap;right:966.05px;transform-origin:100% 0;">8</div>
<div style="position:absolute;top:582.95px;font-family:'Liberation Serif', serif;font-size:21.5px;line-height:21.5px;color:#000;white-space:nowrap;right:886.00px;transform-origin:100% 0;">2023</div>
<div style="position:absolute;top:582.95px;font-family:'Liberation Serif', serif;font-size:21.5px;line-height:21.5px;color:#000;white-space:nowrap;right:806.05px;transform-origin:100% 0;">2</div>
<div style="position:absolute;top:582.95px;font-family:'Liberation Serif', serif;font-size:21.5px;line-height:21.5px;color:#000;white-space:nowrap;right:726.00px;transform-origin:100% 0;">26</div>
<div style="position:absolute;top:582.95px;font-family:'Liberation Serif', serif;font-size:21.5px;line-height:21.5px;color:#000;white-space:nowrap;right:614.05px;transform-origin:100% 0;">810</div>
<div style="position:absolute;top:582.95px;font-family:'Liberation Serif', serif;font-size:21.5px;line-height:21.5px;color:#000;white-space:nowrap;left:1287.00px;transform-origin:0 0;">Đã xong</div>
<div style="position:absolute;top:610.95px;font-family:'Liberation Serif', serif;font-size:21.5px;line-height:21.5px;color:#000;white-space:nowrap;left:31.50px;transform-origin:0 0;">ÂN</div>
<div style="position:absolute;top:610.95px;font-family:'Liberation Serif', serif;font-size:21.5px;line-height:21.5px;color:#000;white-space:nowrap;left:216.00px;transform-origin:0 0;">Nam</div>
<div style="position:absolute;top:610.95px;font-family:'Liberation Serif', serif;font-size:21.5px;line-height:21.5px;color:#000;white-space:nowrap;left:466.90px;transform-origin:0 0;">5/14/2019</div>
<div style="position:absolute;top:610.95px;font-family:'Liberation Serif', serif;font-size:21.5px;line-height:21.5px;color:#000;white-space:nowrap;right:1125.95px;transform-origin:100% 0;">8/2/2023</div>
<div style="position:absolute;top:610.95px;font-family:'Liberation Serif', serif;font-size:21.5px;line-height:21.5px;color:#000;white-space:nowrap;right:1046.05px;transform-origin:100% 0;">2</div>
<div style="position:absolute;top:610.95px;font-family:'Liberation Serif', serif;font-size:21.5px;line-height:21.5px;color:#000;white-space:nowrap;right:966.05px;transform-origin:100% 0;">8</div>
<div style="position:absolute;top:610.95px;font-family:'Liberation Serif', serif;font-size:21.5px;line-height:21.5px;color:#000;white-space:nowrap;right:886.00px;transform-origin:100% 0;">2023</div>
<div style="position:absolute;top:610.95px;font-family:'Liberation Serif', serif;font-size:21.5px;line-height:21.5px;color:#000;white-space:nowrap;right:806.05px;transform-origin:100% 0;">4</div>
<div style="position:absolute;top:610.95px;font-family:'Liberation Serif', serif;font-size:21.5px;line-height:21.5px;color:#000;white-space:nowrap;right:726.00px;transform-origin:100% 0;">50</div>
<div style="position:absolute;top:610.95px;font-family:'Liberation Serif', serif;font-size:21.5px;line-height:21.5px;color:#000;white-space:nowrap;right:614.00px;transform-origin:100% 0;">1541</div>
<div style="position:absolute;top:610.95px;font-family:'Liberation Serif', serif;font-size:21.5px;line-height:21.5px;color:#000;white-space:nowrap;left:1287.00px;transform-origin:0 0;">Đã xong</div>
<div style="position:absolute;top:638.95px;font-family:'Liberation Serif', serif;font-size:21.5px;line-height:21.5px;color:#000;white-space:nowrap;left:31.50px;transform-origin:0 0;">LINH</div>
<div style="position:absolute;top:638.95px;font-family:'Liberation Serif', serif;font-size:21.5px;line-height:21.5px;color:#000;white-space:nowrap;left:216.00px;transform-origin:0 0;">Nữ</div>
<div style="position:absolute;top:638.95px;font-family:'Liberation Serif', serif;font-size:21.5px;line-height:21.5px;color:#000;white-space:nowrap;left:466.90px;transform-origin:0 0;">5/15/2023</div>
<div style="position:absolute;top:638.95px;font-family:'Liberation Serif', serif;font-size:21.5px;line-height:21.5px;color:#000;white-space:nowrap;right:1125.95px;transform-origin:100% 0;">8/3/2023</div>
<div style="position:absolute;top:638.95px;font-family:'Liberation Serif', serif;font-size:21.5px;line-height:21.5px;color:#000;white-space:nowrap;right:1046.05px;transform-origin:100% 0;">3</div>
<div style="position:absolute;top:638.95px;font-family:'Liberation Serif', serif;font-size:21.5px;line-height:21.5px;color:#000;white-space:nowrap;right:966.05px;transform-origin:100% 0;">8</div>
<div style="position:absolute;top:638.95px;font-family:'Liberation Serif', serif;font-size:21.5px;line-height:21.5px;color:#000;white-space:nowrap;right:886.00px;transform-origin:100% 0;">2023</div>
<div style="position:absolute;top:638.95px;font-family:'Liberation Serif', serif;font-size:21.5px;line-height:21.5px;color:#000;white-space:nowrap;right:806.05px;transform-origin:100% 0;">0</div>
<div style="position:absolute;top:638.95px;font-family:'Liberation Serif', serif;font-size:21.5px;line-height:21.5px;color:#000;white-space:nowrap;right:726.05px;transform-origin:100% 0;">2</div>
<div style="position:absolute;top:638.95px;font-family:'Liberation Serif', serif;font-size:21.5px;line-height:21.5px;color:#000;white-space:nowrap;right:614.00px;transform-origin:100% 0;">80</div>
<div style="position:absolute;top:638.95px;font-family:'Liberation Serif', serif;font-size:21.5px;line-height:21.5px;color:#000;white-space:nowrap;left:1287.00px;transform-origin:0 0;">Đã xong</div>
<div style="position:absolute;top:666.95px;font-family:'Liberation Serif', serif;font-size:21.5px;line-height:21.5px;color:#000;white-space:nowrap;left:31.50px;transform-origin:0 0;">TRÚC</div>
<div style="position:absolute;top:666.95px;font-family:'Liberation Serif', serif;font-size:21.5px;line-height:21.5px;color:#000;white-space:nowrap;left:216.00px;transform-origin:0 0;">Nữ</div>
<div style="position:absolute;top:666.95px;font-family:'Liberation Serif', serif;font-size:21.5px;line-height:21.5px;color:#000;white-space:nowrap;left:466.90px;transform-origin:0 0;">5/15/2023</div>
<div style="position:absolute;top:666.95px;font-family:'Liberation Serif', serif;font-size:21.5px;line-height:21.5px;color:#000;white-space:nowrap;right:1125.95px;transform-origin:100% 0;">8/3/2023</div>
<div style="position:absolute;top:666.95px;font-family:'Liberation Serif', serif;font-size:21.5px;line-height:21.5px;color:#000;white-space:nowrap;right:1046.05px;transform-origin:100% 0;">3</div>
<div style="position:absolute;top:666.95px;font-family:'Liberation Serif', serif;font-size:21.5px;line-height:21.5px;color:#000;white-space:nowrap;right:966.05px;transform-origin:100% 0;">8</div>
<div style="position:absolute;top:666.95px;font-family:'Liberation Serif', serif;font-size:21.5px;line-height:21.5px;color:#000;white-space:nowrap;right:886.00px;transform-origin:100% 0;">2023</div>
<div style="position:absolute;top:666.95px;font-family:'Liberation Serif', serif;font-size:21.5px;line-height:21.5px;color:#000;white-space:nowrap;right:806.05px;transform-origin:100% 0;">0</div>
<div style="position:absolute;top:666.95px;font-family:'Liberation Serif', serif;font-size:21.5px;line-height:21.5px;color:#000;white-space:nowrap;right:726.05px;transform-origin:100% 0;">2</div>
<div style="position:absolute;top:666.95px;font-family:'Liberation Serif', serif;font-size:21.5px;line-height:21.5px;color:#000;white-space:nowrap;right:614.00px;transform-origin:100% 0;">80</div>
<div style="position:absolute;top:666.95px;font-family:'Liberation Serif', serif;font-size:21.5px;line-height:21.5px;color:#000;white-space:nowrap;left:1287.00px;transform-origin:0 0;">Đã xong</div>
<div style="position:absolute;top:694.95px;font-family:'Liberation Serif', serif;font-size:21.5px;line-height:21.5px;color:#000;white-space:nowrap;left:31.50px;transform-origin:0 0;">THU</div>
<div style="position:absolute;top:694.95px;font-family:'Liberation Serif', serif;font-size:21.5px;line-height:21.5px;color:#000;white-space:nowrap;left:216.00px;transform-origin:0 0;">Nữ</div>
<div style="position:absolute;top:694.95px;font-family:'Liberation Serif', serif;font-size:21.5px;line-height:21.5px;color:#000;white-space:nowrap;left:466.90px;transform-origin:0 0;">5/12/2022</div>
<div style="position:absolute;top:694.95px;font-family:'Liberation Serif', serif;font-size:21.5px;line-height:21.5px;color:#000;white-space:nowrap;right:1126.00px;transform-origin:100% 0;">7/31/2023</div>
<div style="position:absolute;top:694.95px;font-family:'Liberation Serif', serif;font-size:21.5px;line-height:21.5px;color:#000;white-space:nowrap;right:1046.00px;transform-origin:100% 0;">31</div>
<div style="position:absolute;top:694.95px;font-family:'Liberation Serif', serif;font-size:21.5px;line-height:21.5px;color:#000;white-space:nowrap;right:966.05px;transform-origin:100% 0;">7</div>
<div style="position:absolute;top:694.95px;font-family:'Liberation Serif', serif;font-size:21.5px;line-height:21.5px;color:#000;white-space:nowrap;right:886.00px;transform-origin:100% 0;">2023</div>
<div style="position:absolute;top:694.95px;font-family:'Liberation Serif', serif;font-size:21.5px;line-height:21.5px;color:#000;white-space:nowrap;right:806.05px;transform-origin:100% 0;">1</div>
<div style="position:absolute;top:694.95px;font-family:'Liberation Serif', serif;font-size:21.5px;line-height:21.5px;color:#000;white-space:nowrap;right:726.00px;transform-origin:100% 0;">14</div>
<div style="position:absolute;top:694.95px;font-family:'Liberation Serif', serif;font-size:21.5px;line-height:21.5px;color:#000;white-space:nowrap;right:614.05px;transform-origin:100% 0;">445</div>
<div style="position:absolute;top:694.95px;font-family:'Liberation Serif', serif;font-size:21.5px;line-height:21.5px;color:#000;white-space:nowrap;left:1287.00px;transform-origin:0 0;">Đã xong</div>
<div style="position:absolute;top:722.95px;font-family:'Liberation Serif', serif;font-size:21.5px;line-height:21.5px;color:#000;white-space:nowrap;left:31.50px;transform-origin:0 0;">THU</div>
<div style="position:absolute;top:722.95px;font-family:'Liberation Serif', serif;font-size:21.5px;line-height:21.5px;color:#000;white-space:nowrap;left:216.00px;transform-origin:0 0;">Nữ</div>
<div style="position:absolute;top:722.95px;font-family:'Liberation Serif', serif;font-size:21.5px;line-height:21.5px;color:#000;white-space:nowrap;left:466.90px;transform-origin:0 0;">5/12/2022</div>
<div style="position:absolute;top:722.95px;font-family:'Liberation Serif', serif;font-size:21.5px;line-height:21.5px;color:#000;white-space:nowrap;right:1126.00px;transform-origin:100% 0;">7/31/2023</div>
<div style="position:absolute;top:722.95px;font-family:'Liberation Serif', serif;font-size:21.5px;line-height:21.5px;color:#000;white-space:nowrap;right:1046.00px;transform-origin:100% 0;">31</div>
<div style="position:absolute;top:722.95px;font-family:'Liberation Serif', serif;font-size:21.5px;line-height:21.5px;color:#000;white-space:nowrap;right:966.05px;transform-origin:100% 0;">7</div>
<div style="position:absolute;top:722.95px;font-family:'Liberation Serif', serif;font-size:21.5px;line-height:21.5px;color:#000;white-space:nowrap;right:886.00px;transform-origin:100% 0;">2023</div>
<div style="position:absolute;top:722.95px;font-family:'Liberation Serif', serif;font-size:21.5px;line-height:21.5px;color:#000;white-space:nowrap;right:806.05px;transform-origin:100% 0;">1</div>
<div style="position:absolute;top:722.95px;font-family:'Liberation Serif', serif;font-size:21.5px;line-height:21.5px;color:#000;white-space:nowrap;right:726.00px;transform-origin:100% 0;">14</div>
<div style="position:absolute;top:722.95px;font-family:'Liberation Serif', serif;font-size:21.5px;line-height:21.5px;color:#000;white-space:nowrap;right:614.05px;transform-origin:100% 0;">445</div>
<div style="position:absolute;top:722.95px;font-family:'Liberation Serif', serif;font-size:21.5px;line-height:21.5px;color:#000;white-space:nowrap;left:1287.00px;transform-origin:0 0;">Đã xong</div>
<div style="position:absolute;left:1888px;top:222px;width:5px;height:683px;background:#f0f0f0;"></div>
<div style="position:absolute;left:28px;top:353px;width:1px;height:392px;background:#fff;"></div>
<div style="position:absolute;left:211px;top:353px;width:1px;height:392px;background:#fff;"></div>
<div style="position:absolute;left:995.5px;top:326px;width:2.5px;height:27px;background:#fff;"></div>
<div style="position:absolute;left:995.5px;top:354px;width:2.5px;height:27px;background:#fff;"></div>
<div style="position:absolute;left:995.5px;top:382px;width:2.5px;height:27px;background:#fff;"></div>
<div style="position:absolute;left:995.5px;top:410px;width:2.5px;height:27px;background:#fff;"></div>
<div style="position:absolute;left:995.5px;top:438px;width:2.5px;height:27px;background:#fff;"></div>
<div style="position:absolute;left:995.5px;top:466px;width:2.5px;height:27px;background:#fff;"></div>
<div style="position:absolute;left:995.5px;top:494px;width:2.5px;height:27px;background:#fff;"></div>
<div style="position:absolute;left:26px;top:324px;width:2px;height:422px;background:#107c41;"></div>
<div style="position:absolute;left:212px;top:324px;width:2px;height:418px;background:#107c41;"></div>
<div style="position:absolute;left:26px;top:324px;width:188px;height:2px;background:#107c41;"></div>
<div style="position:absolute;left:26px;top:744px;width:184px;height:2px;background:#107c41;"></div>
<div style="position:absolute;left:210px;top:741px;width:6px;height:6px;background:#107c41;box-shadow:0 0 0 1px #fff;"></div>
<div style="position:absolute;left:28px;top:521px;width:1860px;height:2px;background-image:repeating-linear-gradient(90deg,#107c41 0 7px,#fff 7px 9px);"></div>
<div style="position:absolute;left:28px;top:548px;width:1860px;height:2px;background-image:repeating-linear-gradient(90deg,#107c41 0 7px,#fff 7px 9px);"></div>
<div style="position:absolute;left:27.5px;top:521px;width:1.5px;height:29px;background-image:repeating-linear-gradient(180deg,#107c41 0 7px,#fff 7px 9px);"></div>
<div style="position:absolute;left:0px;top:905px;width:1893px;height:40px;background:#f0f0f0;"></div>
<div style="position:absolute;left:0px;top:904.5px;width:1888px;height:1px;background:#d8d8d8;"></div>
<div style="position:absolute;left:0px;top:945px;width:1893px;height:28px;background:#f3f3f3;border-top:1px solid #fafafa;box-sizing:border-box;"></div>
<div style="position:absolute;left:0px;top:972px;width:1893px;height:1px;background:#7a8a84;"></div>
<svg style="position:absolute;left:24px;top:916px;" width="12" height="16" viewBox="0 0 12 16"><path d="M9 2L3 8l6 6" fill="none" stroke="#8a8a8a" stroke-width="1.4"/></svg>
<svg style="position:absolute;left:64px;top:916px;" width="12" height="16" viewBox="0 0 12 16"><path d="M3 2l6 6-6 6" fill="none" stroke="#8a8a8a" stroke-width="1.4"/></svg>
<div style="position:absolute;left:135px;top:905px;width:72px;height:35px;background:#ffffff;border-radius:6px;box-shadow:0 1px 1px rgba(0,0,0,0.06);"></div>
<div style="position:absolute;top:913.73px;font-family:'Liberation Sans', sans-serif;font-size:17.5px;line-height:17.5px;font-weight:bold;color:#1a1a1a;white-space:nowrap;left:145.40px;transform-origin:0 0;transform:scaleX(0.8972);">Sheet1</div>
<div style="position:absolute;left:145px;top:934.5px;width:52px;height:2.5px;background:#107c41;"></div>
<div style="position:absolute;left:212px;top:913.5px;width:1px;height:23px;background:#c8c8c8;"></div>
<svg style="position:absolute;left:263px;top:915px;" width="18" height="18" viewBox="0 0 18 18"><path d="M9 1.5v15M1.5 9h15" fill="none" stroke="#333" stroke-width="1.6"/></svg>
<div style="position:absolute;left:1148.5px;top:919px;width:2.5px;height:2.5px;background:#333;"></div>
<div style="position:absolute;left:1148.5px;top:924.5px;width:2.5px;height:2.5px;background:#333;"></div>
<div style="position:absolute;left:1148.5px;top:930px;width:2.5px;height:2.5px;background:#333;"></div>
<div style="position:absolute;left:1170px;top:914px;width:723px;height:21px;background:#f7f7f7;border-radius:10px 0 0 10px;"></div>
<svg style="position:absolute;left:1175px;top:918px;" width="11" height="13" viewBox="0 0 11 13"><path d="M9.5 1v11L1 6.5z" fill="#606060"/></svg>
<div style="position:absolute;left:1191px;top:918.5px;width:648px;height:11.5px;background:#6e6e6e;border-radius:6px;"></div>
<svg style="position:absolute;left:1874px;top:918px;" width="11" height="13" viewBox="0 0 11 13"><path d="M1.5 1v11L10 6.5z" fill="#606060"/></svg>
<div style="position:absolute;top:952.65px;font-family:'Liberation Sans', sans-serif;font-size:13px;line-height:13px;color:#262626;white-space:nowrap;left:3.00px;transform-origin:0 0;transform:scaleX(0.9851);">Select destination and press ENTER or choose Paste</div>
<div style="position:absolute;top:952.85px;font-family:'Liberation Sans', sans-serif;font-size:13px;line-height:13px;color:#262626;white-space:nowrap;left:1464.50px;transform-origin:0 0;transform:scaleX(0.9521);">Count: 15</div>
<div style="position:absolute;left:1542px;top:946px;width:50px;height:27px;background:#e0e0e0;"></div>
<svg style="position:absolute;left:1556px;top:949px;" width="20" height="20" viewBox="0 0 20 20"><rect x="2.5" y="2.5" width="15" height="15" fill="none" stroke="#444" stroke-width="1.3"/><path d="M7.5 2.5v15M12.5 2.5v15M2.5 7.5h15M2.5 12.5h15" stroke="#444" stroke-width="1.2"/></svg>
<svg style="position:absolute;left:1607px;top:949px;" width="20" height="20" viewBox="0 0 20 20"><rect x="2" y="2.5" width="16" height="15" fill="none" stroke="#444" stroke-width="1.3"/><rect x="5.5" y="5.5" width="9" height="9" fill="none" stroke="#444" stroke-width="1.1"/><path d="M7 8h6M7 10h6M7 12h6" stroke="#444" stroke-width="1"/></svg>
<svg style="position:absolute;left:1657px;top:949px;" width="21" height="20" viewBox="0 0 21 20"><path d="M2.5 2.5h16v15h-16z" fill="none" stroke="#444" stroke-width="1.3"/><path d="M8 2.5v6h5v-6" fill="none" stroke="#444" stroke-width="1.3"/></svg>
<div style="position:absolute;left:1699px;top:958px;width:9.5px;height:1.3px;background:#444;"></div>
<div style="position:absolute;left:1714px;top:958.5px;width:126px;height:1px;background:#8a8a8a;"></div>
<div style="position:absolute;left:1775px;top:952px;width:6px;height:14px;background:#555;border-radius:1px;"></div>
<svg style="position:absolute;left:1844px;top:952px;" width="13" height="13" viewBox="0 0 13 13"><path d="M6.5 1v11M1 6.5h11" stroke="#444" stroke-width="1.3"/></svg>
<div style="position:absolute;top:952.85px;font-family:'Liberation Sans', sans-serif;font-size:13px;line-height:13px;color:#262626;white-space:nowrap;left:1871.60px;transform-origin:0 0;transform:scaleX(1.0138);">100</div>
<div style="position:absolute;left:705px;top:-20px;width:517px;height:23px;background:#fff;box-sizing:border-box;border:1.5px solid #cdcdcd;border-radius:0 0 6px 6px;"></div>
<div style="position:absolute;top:23.98px;font-family:'Liberation Sans', sans-serif;font-size:16.5px;line-height:16.5px;color:#242424;white-space:nowrap;left:21.50px;transform-origin:0 0;transform:scaleX(0.9060);">File</div>
<div style="position:absolute;top:23.98px;font-family:'Liberation Sans', sans-serif;font-size:16.5px;line-height:16.5px;font-weight:bold;color:#242424;white-space:nowrap;left:78.60px;transform-origin:0 0;transform:scaleX(1.0066);">Home</div>
<div style="position:absolute;top:23.98px;font-family:'Liberation Sans', sans-serif;font-size:16.5px;line-height:16.5px;color:#242424;white-space:nowrap;left:148.40px;transform-origin:0 0;transform:scaleX(1.0121);">Insert</div>
<div style="position:absolute;top:23.98px;font-family:'Liberation Sans', sans-serif;font-size:16.5px;line-height:16.5px;color:#242424;white-space:nowrap;left:215.50px;transform-origin:0 0;transform:scaleX(0.9903);">Page Layout</div>
<div style="position:absolute;top:23.98px;font-family:'Liberation Sans', sans-serif;font-size:16.5px;line-height:16.5px;color:#242424;white-space:nowrap;left:332.00px;transform-origin:0 0;">Formulas</div>
<div style="position:absolute;top:23.98px;font-family:'Liberation Sans', sans-serif;font-size:16.5px;line-height:16.5px;color:#242424;white-space:nowrap;left:425.00px;transform-origin:0 0;transform:scaleX(1.0315);">Data</div>
<div style="position:absolute;top:23.98px;font-family:'Liberation Sans', sans-serif;font-size:16.5px;line-height:16.5px;color:#242424;white-space:nowrap;left:485.50px;transform-origin:0 0;transform:scaleX(0.9502);">Review</div>
<div style="position:absolute;top:23.98px;font-family:'Liberation Sans', sans-serif;font-size:16.5px;line-height:16.5px;color:#242424;white-space:nowrap;left:562.00px;transform-origin:0 0;transform:scaleX(1.0141);">View</div>
<div style="position:absolute;top:23.98px;font-family:'Liberation Sans', sans-serif;font-size:16.5px;line-height:16.5px;color:#242424;white-space:nowrap;left:622.00px;transform-origin:0 0;transform:scaleX(1.0765);">Automate</div>
<div style="position:absolute;top:23.98px;font-family:'Liberation Sans', sans-serif;font-size:16.5px;line-height:16.5px;color:#242424;white-space:nowrap;left:721.50px;transform-origin:0 0;transform:scaleX(1.0173);">Developer</div>
<div style="position:absolute;top:23.98px;font-family:'Liberation Sans', sans-serif;font-size:16.5px;line-height:16.5px;color:#242424;white-space:nowrap;left:822.00px;transform-origin:0 0;transform:scaleX(1.0324);">Help</div>
<div style="position:absolute;top:23.98px;font-family:'Liberation Sans', sans-serif;font-size:16.5px;line-height:16.5px;color:#242424;white-space:nowrap;left:881.00px;transform-origin:0 0;transform:scaleX(0.9309);">WPS PDF</div>
<div style="position:absolute;left:78px;top:44px;width:48px;height:3px;background:#107c41;border-radius:2px;"></div>
<div style="position:absolute;left:1663.5px;top:16px;width:124px;height:29.5px;background:#fff;box-sizing:border-box;border:1px solid #c4c4c4;border-radius:5px;"></div>
<div style="position:absolute;top:22.58px;font-family:'Liberation Sans', sans-serif;font-size:16.5px;line-height:16.5px;color:#242424;white-space:nowrap;left:1693.60px;transform-origin:0 0;transform:scaleX(1.0301);">Comments</div>
<svg style="position:absolute;left:1672px;top:22px;" width="18" height="16" viewBox="0 0 18 16"><path d="M2.5 1.5h13v9.5h-7.5l-4.5 3.5v-3.5h-1z" fill="none" stroke="#333" stroke-width="1.3" stroke-linejoin="round"/></svg>
<div style="position:absolute;left:1798px;top:16px;width:110px;height:30px;background:#107c41;border-radius:5px;"></div>
<div style="position:absolute;top:22.77px;font-family:'Liberation Sans', sans-serif;font-size:16.5px;line-height:16.5px;color:#fff;white-space:nowrap;left:1828.20px;transform-origin:0 0;transform:scaleX(0.9545);">Share</div>
<svg style="position:absolute;left:1806px;top:21px;" width="20" height="20" viewBox="0 0 20 20"><path d="M3 8v9h12v-4" fill="none" stroke="#fff" stroke-width="1.4"/><path d="M6 14c0-5 3-7 8-7h3" fill="none" stroke="#fff" stroke-width="1.4"/><path d="M14 3.5l4 3.5-4 3.5" fill="none" stroke="#fff" stroke-width="1.4" stroke-linejoin="round"/></svg>
<svg style="position:absolute;left:1883px;top:26px;" width="12" height="10" viewBox="0 0 12 10"><path d="M1.5 3l4 4 4-4" fill="none" stroke="#fff" stroke-width="1.4"/></svg>
<div style="position:absolute;left:4px;top:50px;width:1900px;height:123.5px;background:#ffffff;border-radius:8px;box-shadow:0 1px 2px rgba(0,0,0,0.18),0 0 1px rgba(0,0,0,0.1);"></div>
<div style="position:absolute;left:1000.5px;top:53px;width:86px;height:96px;background:#e6e6e6;"></div>
<div style="position:absolute;left:132.5px;top:57px;width:1px;height:109px;background:#e1e1e1;"></div>
<div style="position:absolute;left:424.5px;top:57px;width:1px;height:109px;background:#e1e1e1;"></div>
<div style="position:absolute;left:787.5px;top:57px;width:1px;height:109px;background:#e1e1e1;"></div>
<div style="position:absolute;left:987.6px;top:57px;width:1px;height:109px;background:#e1e1e1;"></div>
<div style="position:absolute;left:1230.5px;top:57px;width:1px;height:109px;background:#e1e1e1;"></div>
<div style="position:absolute;left:1410.4px;top:57px;width:1px;height:109px;background:#e1e1e1;"></div>
<div style="position:absolute;left:1667.5px;top:57px;width:1px;height:109px;background:#e1e1e1;"></div>
<div style="position:absolute;left:1744.4px;top:57px;width:1px;height:109px;background:#e1e1e1;"></div>
<div style="position:absolute;left:1821.4px;top:57px;width:1px;height:109px;background:#e1e1e1;"></div>
<div style="position:absolute;top:154.75px;font-family:'Liberation Sans', sans-serif;font-size:13px;line-height:13px;color:#242424;white-space:nowrap;left:31.60px;transform-origin:0 0;transform:scaleX(1.0144);">Clipboard</div>
<div style="position:absolute;top:154.75px;font-family:'Liberation Sans', sans-serif;font-size:13px;line-height:13px;color:#242424;white-space:nowrap;left:256.50px;transform-origin:0 0;transform:scaleX(0.9385);">Font</div>
<div style="position:absolute;top:154.75px;font-family:'Liberation Sans', sans-serif;font-size:13px;line-height:13px;color:#242424;white-space:nowrap;left:567.20px;transform-origin:0 0;">Alignment</div>
<div style="position:absolute;top:154.75px;font-family:'Liberation Sans', sans-serif;font-size:13px;line-height:13px;color:#242424;white-space:nowrap;left:853.50px;transform-origin:0 0;transform:scaleX(1.0173);">Number</div>
<div style="position:absolute;top:154.75px;font-family:'Liberation Sans', sans-serif;font-size:13px;line-height:13px;color:#242424;white-space:nowrap;left:1519.50px;transform-origin:0 0;transform:scaleX(0.9874);">Editing</div>
<div style="position:absolute;top:154.75px;font-family:'Liberation Sans', sans-serif;font-size:13px;line-height:13px;color:#242424;white-space:nowrap;left:1683.00px;transform-origin:0 0;">Add-ins</div>
<svg style="position:absolute;left:118px;top:157px;" width="11" height="11" viewBox="0 0 11 11"><path d="M1 10V1h4M10 6v4H6M3 3l6.5 6.5M9.5 5.5v4h-4" fill="none" stroke="#444" stroke-width="1.1"/></svg>
<svg style="position:absolute;left:409.7px;top:157px;" width="11" height="11" viewBox="0 0 11 11"><path d="M1 10V1h4M10 6v4H6M3 3l6.5 6.5M9.5 5.5v4h-4" fill="none" stroke="#444" stroke-width="1.1"/></svg>
<svg style="position:absolute;left:773.4px;top:157px;" width="11" height="11" viewBox="0 0 11 11"><path d="M1 10V1h4M10 6v4H6M3 3l6.5 6.5M9.5 5.5v4h-4" fill="none" stroke="#444" stroke-width="1.1"/></svg>
<svg style="position:absolute;left:973px;top:157px;" width="11" height="11" viewBox="0 0 11 11"><path d="M1 10V1h4M10 6v4H6M3 3l6.5 6.5M9.5 5.5v4h-4" fill="none" stroke="#444" stroke-width="1.1"/></svg>
<svg style="position:absolute;left:1878px;top:152px;" width="15" height="10" viewBox="0 0 15 10"><path d="M2 2l5.5 6 5.5-6" fill="none" stroke="#333" stroke-width="1.3"/></svg>
<div style="position:absolute;left:4.5px;top:184px;width:126px;height:29.5px;background:#fff;box-sizing:border-box;border:1px solid #d6d6d6;border-radius:6px;"></div>
<div style="position:absolute;top:192.55px;font-family:'Liberation Sans', sans-serif;font-size:15px;line-height:15px;color:#242424;white-space:nowrap;left:11.00px;transform-origin:0 0;transform:scaleX(0.9290);">A3</div>
<svg style="position:absolute;left:110px;top:193px;" width="16" height="10" viewBox="0 0 16 10"><path d="M2 2l6 6 6-6" fill="none" stroke="#333" stroke-width="1.4"/></svg>
<div style="position:absolute;left:141.5px;top:194px;width:3px;height:2.5px;background:#333;"></div>
<div style="position:absolute;left:141.5px;top:199.5px;width:3px;height:2.5px;background:#333;"></div>
<div style="position:absolute;left:141.5px;top:205px;width:3px;height:2.5px;background:#333;"></div>
<div style="position:absolute;left:156px;top:184px;width:91px;height:29.5px;background:#fff;box-sizing:border-box;border:1px solid #d6d6d6;border-radius:6px;"></div>
<svg style="position:absolute;left:163px;top:191px;" width="18" height="17" viewBox="0 0 18 17"><path d="M1.5 1.5l14 14M15.5 1.5l-14 14" fill="none" stroke="#a6a6a6" stroke-width="1.3"/></svg>
<svg style="position:absolute;left:191px;top:191px;" width="22" height="17" viewBox="0 0 22 17"><path d="M1.5 9l7 6.5 12-13.5" fill="none" stroke="#a6a6a6" stroke-width="1.3"/></svg>
<div style="position:absolute;top:189.40px;font-family:'Liberation Serif', serif;font-size:20px;line-height:20px;color:#333;white-space:nowrap;left:223.50px;transform-origin:0 0;transform:scaleX(1.0479);font-style:italic;">fx</div>
<div style="position:absolute;left:253px;top:184px;width:1700px;height:29.5px;background:#fff;box-sizing:border-box;border:1px solid #d6d6d6;border-radius:6px;"></div>
<div style="position:absolute;top:192.55px;font-family:'Liberation Sans', sans-serif;font-size:15px;line-height:15px;color:#242424;white-space:nowrap;left:268.00px;transform-origin:0 0;transform:scaleX(1.0112);">BÌNH</div>
<svg style="position:absolute;left:1885px;top:194px;" width="16" height="10" viewBox="0 0 16 10"><path d="M2 2l6 6 6-6" fill="none" stroke="#333" stroke-width="1.3"/></svg>
<svg style="position:absolute;left:29px;top:58px;" width="40" height="42" viewBox="0 0 40 42"><rect x="3" y="7.5" width="26" height="29.5" fill="#fff" stroke="#e8820c" stroke-width="2"/><rect x="5" y="9.5" width="22" height="25.5" fill="none" stroke="#fde4a8" stroke-width="1.6"/><path d="M8 12.5V7.5h5a3.2 3.2 0 0 1 6.4 0h5v5z" fill="#fff" stroke="#6b6b6b" stroke-width="1.6" stroke-linejoin="round"/><rect x="19.5" y="18" width="16" height="21.5" fill="#f7f7f7" stroke="#555" stroke-width="1.7"/></svg>
<div style="position:absolute;top:105.60px;font-family:'Liberation Sans', sans-serif;font-size:14px;line-height:14px;color:#242424;white-space:nowrap;left:28.50px;transform-origin:0 0;transform:scaleX(0.9078);">Paste</div>
<svg style="position:absolute;left:39.5px;top:128.5px;" width="10" height="7" viewBox="0 0 10 7"><path d="M1.5 1.5L5.0 5.5L8.5 1.5" fill="none" stroke="#444" stroke-width="1.2"/></svg>
<svg style="position:absolute;left:80px;top:57px;" width="16" height="24" viewBox="0 0 16 24"><path d="M4 1l6.5 15M12 1L5.5 16" stroke="#444" stroke-width="1.1"/><circle cx="4.3" cy="19" r="2.6" fill="#fff" stroke="#1e88d4" stroke-width="1.4"/><circle cx="11.7" cy="19" r="2.6" fill="#fff" stroke="#1e88d4" stroke-width="1.4"/></svg>
<svg style="position:absolute;left:77px;top:90px;" width="24" height="22" viewBox="0 0 24 22"><path d="M2 18V2h7l3 3" fill="none" stroke="#555" stroke-width="1.3"/><path d="M9 6h7l4 4v10.5H9z" fill="#f5f5f5" stroke="#555" stroke-width="1.3" stroke-linejoin="round"/><path d="M12 14h5M12 17h5" stroke="#777" stroke-width="1"/></svg>
<svg style="position:absolute;left:106.5px;top:98.5px;" width="10" height="7" viewBox="0 0 10 7"><path d="M1.5 1.5L5.0 5.5L8.5 1.5" fill="none" stroke="#444" stroke-width="1.2"/></svg>
<svg style="position:absolute;left:76px;top:120px;" width="26" height="24" viewBox="0 0 26 24"><path d="M3 13.5l7.5-4.5 6 6-4.5 7.5z" fill="#fde2b0" stroke="#e8820c" stroke-width="1.6" stroke-linejoin="round"/><path d="M5 17l5 5" stroke="#e8820c" stroke-width="1.2"/><path d="M10.5 9l6 6 2.5-2.5-6-6z" fill="#fff" stroke="#444" stroke-width="1.4" stroke-linejoin="round"/><path d="M15.5 7.5l5-5 3.5 3.5-5 5z" fill="#fff" stroke="#444" stroke-width="1.4" stroke-linejoin="round"/></svg>
<div style="position:absolute;left:143.5px;top:63.8px;width:143px;height:30px;background:#fff;box-sizing:border-box;border:1px solid #8a8a8a;border-radius:5px;"></div>
<div style="position:absolute;top:72.17px;font-family:'Liberation Sans', sans-serif;font-size:14.5px;line-height:14.5px;color:#242424;white-space:nowrap;left:146.60px;transform-origin:0 0;">Times New Roman</div>
<svg style="position:absolute;left:274.5px;top:76.0px;" width="10" height="7.0" viewBox="0 0 10 7.0"><path d="M1.5 1.5L5.0 5.5L8.5 1.5" fill="none" stroke="#444" stroke-width="1.2"/></svg>
<div style="position:absolute;left:289.5px;top:63.8px;width:61px;height:30px;background:#fff;box-sizing:border-box;border:1px solid #8a8a8a;border-radius:5px;"></div>
<div style="position:absolute;top:72.17px;font-family:'Liberation Sans', sans-serif;font-size:14.5px;line-height:14.5px;color:#242424;white-space:nowrap;left:293.00px;transform-origin:0 0;transform:scaleX(0.8696);">13</div>
<svg style="position:absolute;left:338.5px;top:76.0px;" width="10" height="7.0" viewBox="0 0 10 7.0"><path d="M1.5 1.5L5.0 5.5L8.5 1.5" fill="none" stroke="#444" stroke-width="1.2"/></svg>
<div style="position:absolute;top:65.88px;font-family:'Liberation Sans', sans-serif;font-size:22.5px;line-height:22.5px;color:#242424;white-space:nowrap;left:359.50px;transform-origin:0 0;transform:scaleX(0.9000);">A</div>
<svg style="position:absolute;left:372px;top:68px;" width="8" height="6" viewBox="0 0 8 6"><path d="M1 5l3-3.5 3 3.5" fill="none" stroke="#1e88d4" stroke-width="1.3"/></svg>
<div style="position:absolute;top:71.40px;font-family:'Liberation Sans', sans-serif;font-size:16px;line-height:16px;color:#242424;white-space:nowrap;left:393.00px;transform-origin:0 0;transform:scaleX(0.9346);">A</div>
<svg style="position:absolute;left:403px;top:69px;" width="8" height="6" viewBox="0 0 8 6"><path d="M1 1l3 3.5 3-3.5" fill="none" stroke="#1e88d4" stroke-width="1.3"/></svg>
<div style="position:absolute;top:110.40px;font-family:'Liberation Sans', sans-serif;font-size:16px;line-height:16px;font-weight:bold;color:#333;white-space:nowrap;left:153.50px;transform-origin:0 0;transform:scaleX(0.8190);">B</div>
<div style="position:absolute;top:109.89px;font-family:'Liberation Serif', serif;font-size:17px;line-height:17px;color:#333;white-space:nowrap;left:185.50px;transform-origin:0 0;transform:scaleX(1.4912);font-style:italic;">I</div>
<div style="position:absolute;top:110.40px;font-family:'Liberation Sans', sans-serif;font-size:16px;line-height:16px;color:#333;white-space:nowrap;left:215.60px;transform-origin:0 0;transform:scaleX(0.9828);">U</div>
<div style="position:absolute;left:215.5px;top:125.5px;width:11.5px;height:1.4px;background:#333;"></div>
<svg style="position:absolute;left:240.2px;top:115.9px;" width="10.300000000000011" height="7.199999999999989" viewBox="0 0 10.300000000000011 7.199999999999989"><path d="M1.5 1.5L5.150000000000006 5.699999999999989L8.800000000000011 1.5" fill="none" stroke="#444" stroke-width="1.2"/></svg>
<div style="position:absolute;left:258.5px;top:105px;width:1px;height:28px;background:#d6d6d6;"></div>
<svg style="position:absolute;left:265px;top:108px;" width="21" height="21" viewBox="0 0 21 21"><path d="M1.5 1.5h18M1.5 1.5v17M19.5 1.5v17M10.5 1.5v17M1.5 10h18" fill="none" stroke="#777" stroke-width="1" stroke-dasharray="1.5 1.5"/><path d="M1 19h19" stroke="#444" stroke-width="1.8"/></svg>
<svg style="position:absolute;left:294.1px;top:115.9px;" width="10.099999999999966" height="7.199999999999989" viewBox="0 0 10.099999999999966 7.199999999999989"><path d="M1.5 1.5L5.049999999999983 5.699999999999989L8.599999999999966 1.5" fill="none" stroke="#444" stroke-width="1.2"/></svg>
<div style="position:absolute;left:312.5px;top:105px;width:1px;height:28px;background:#d6d6d6;"></div>
<svg style="position:absolute;left:319px;top:106px;" width="23" height="24" viewBox="0 0 23 24"><path d="M5 10l7-7 6 6-5 6z" fill="#fff" stroke="#444" stroke-width="1.4" stroke-linejoin="round"/><path d="M12 3l-2-2" stroke="#444" stroke-width="1.4"/><path d="M18 8c2 1 3 3 3 6" fill="none" stroke="#1e6fc0" stroke-width="2"/><rect x="1" y="18" width="20" height="5" fill="#ffff00"/></svg>
<svg style="position:absolute;left:348.0px;top:115.9px;" width="10.5" height="7.199999999999989" viewBox="0 0 10.5 7.199999999999989"><path d="M1.5 1.5L5.25 5.699999999999989L9.0 1.5" fill="none" stroke="#444" stroke-width="1.2"/></svg>
<div style="position:absolute;top:107.05px;font-family:'Liberation Sans', sans-serif;font-size:17px;line-height:17px;color:#333;white-space:nowrap;left:371.50px;transform-origin:0 0;transform:scaleX(1.2281);">A</div>
<div style="position:absolute;left:371px;top:124.2px;width:20px;height:4.6px;background:#ff0000;"></div>
<svg style="position:absolute;left:399.2px;top:115.9px;" width="10.0" height="7.199999999999989" viewBox="0 0 10.0 7.199999999999989"><path d="M1.5 1.5L5.0 5.699999999999989L8.5 1.5" fill="none" stroke="#444" stroke-width="1.2"/></svg>
<svg style="position:absolute;left:439px;top:60px;" width="22" height="72" viewBox="0 0 22 72"><path d="M2 9.5H20" stroke="#444" stroke-width="1.6"/><path d="M4 14.5H18" stroke="#444" stroke-width="1.6"/><path d="M2 19.7H20" stroke="#444" stroke-width="1.6"/></svg>
<svg style="position:absolute;left:471px;top:60px;" width="22" height="72" viewBox="0 0 22 72"><path d="M4 13H18" stroke="#444" stroke-width="1.6"/><path d="M2 17.7H20" stroke="#444" stroke-width="1.6"/><path d="M4 23H18" stroke="#444" stroke-width="1.6"/></svg>
<div style="position:absolute;left:499.5px;top:64.5px;width:29px;height:29px;background:#e6e6e6;box-sizing:border-box;border:1px solid #8a8a8a;border-radius:4px;"></div>
<svg style="position:absolute;left:503px;top:60px;" width="22" height="72" viewBox="0 0 22 72"><path d="M4 18H18" stroke="#444" stroke-width="1.6"/><path d="M2 23H20" stroke="#444" stroke-width="1.6"/><path d="M2 28H20" stroke="#444" stroke-width="1.6"/></svg>
<div style="position:absolute;left:531px;top:64px;width:1px;height:29px;background:#d6d6d6;"></div>
<svg style="position:absolute;left:536px;top:66px;" width="26" height="25" viewBox="0 0 26 25"><text x="1.5" y="14" font-family="Liberation Sans" font-size="12.5" fill="#444" transform="rotate(-45 7 9)">ab</text><path d="M9.8 21.3L23 8.2M16.5 8.2H23V14.7" fill="none" stroke="#1e88d4" stroke-width="1.5"/></svg>
<svg style="position:absolute;left:565.1px;top:75.5px;" width="10.600000000000023" height="7.700000000000003" viewBox="0 0 10.600000000000023 7.700000000000003"><path d="M1.5 1.5L5.300000000000011 6.200000000000003L9.100000000000023 1.5" fill="none" stroke="#444" stroke-width="1.2"/></svg>
<div style="position:absolute;left:603.5px;top:63px;width:1px;height:77px;background:#d6d6d6;"></div>
<svg style="position:absolute;left:617px;top:67px;" width="22" height="23" viewBox="0 0 22 23"><text x="1.3" y="11.9" font-family="Liberation Sans" font-size="12.5" fill="#444">ab</text><text x="1.3" y="20.7" font-family="Liberation Sans" font-size="12.5" fill="#444">c</text><path d="M17 12.3v1.2a4 4 0 0 1-4 4H10M12.8 14.7l-2.8 2.8 2.8 2.8" fill="none" stroke="#1e88d4" stroke-width="1.5"/></svg>
<div style="position:absolute;top:73.38px;font-family:'Liberation Sans', sans-serif;font-size:14.5px;line-height:14.5px;color:#242424;white-space:nowrap;left:641.30px;transform-origin:0 0;transform:scaleX(1.0263);">Wrap Text</div>
<svg style="position:absolute;left:439px;top:60px;" width="22" height="72" viewBox="0 0 22 72"><path d="M2 50.2H20" stroke="#444" stroke-width="1.6"/><path d="M2 54.9H14" stroke="#444" stroke-width="1.6"/><path d="M2 60.7H20" stroke="#444" stroke-width="1.6"/><path d="M2 65.9H14" stroke="#444" stroke-width="1.6"/></svg>
<svg style="position:absolute;left:471px;top:60px;" width="22" height="72" viewBox="0 0 22 72"><path d="M2 50.2H20" stroke="#444" stroke-width="1.6"/><path d="M5 54.9H17" stroke="#444" stroke-width="1.6"/><path d="M2 60.7H20" stroke="#444" stroke-width="1.6"/><path d="M5 65.9H17" stroke="#444" stroke-width="1.6"/></svg>
<svg style="position:absolute;left:503px;top:60px;" width="22" height="72" viewBox="0 0 22 72"><path d="M2 50.2H20" stroke="#444" stroke-width="1.6"/><path d="M8 54.9H20" stroke="#444" stroke-width="1.6"/><path d="M2 60.7H20" stroke="#444" stroke-width="1.6"/><path d="M8 65.9H20" stroke="#444" stroke-width="1.6"/></svg>
<div style="position:absolute;left:531px;top:104px;width:1px;height:29px;background:#d6d6d6;"></div>
<svg style="position:absolute;left:539px;top:108px;" width="21" height="20" viewBox="0 0 21 20"><path d="M1 2h18M10 7.5h9M10 12.5h9M1 18h18" stroke="#444" stroke-width="1.6"/><path d="M8 10H2M5 7l-3 3 3 3" fill="none" stroke="#1e88d4" stroke-width="1.4"/></svg>
<svg style="position:absolute;left:571px;top:108px;" width="21" height="20" viewBox="0 0 21 20"><path d="M1 2h18M10 7.5h9M10 12.5h9M1 18h18" stroke="#444" stroke-width="1.6"/><path d="M1 10h6M4 7l3 3-3 3" fill="none" stroke="#1e88d4" stroke-width="1.4"/></svg>
<svg style="position:absolute;left:615px;top:108px;" width="22" height="21" viewBox="0 0 22 21"><rect x="1.8" y="1.8" width="17.5" height="17.5" fill="#fff" stroke="#444" stroke-width="1.6"/><path d="M10.5 1.8v17.5" stroke="#444" stroke-width="1.3"/><rect x="1.8" y="5.2" width="17.5" height="10.2" fill="#fff" stroke="#1e88d4" stroke-width="1.6"/><path d="M4.5 10.3h12M7.5 7.5l-3 2.8 3 2.8M13.5 7.5l3 2.8-3 2.8" fill="none" stroke="#1e88d4" stroke-width="1.4"/></svg>
<div style="position:absolute;top:112.97px;font-family:'Liberation Sans', sans-serif;font-size:14.5px;line-height:14.5px;color:#242424;white-space:nowrap;left:641.30px;transform-origin:0 0;transform:scaleX(1.0323);">Merge &amp; Center</div>
<svg style="position:absolute;left:761.5px;top:116.5px;" width="10" height="7" viewBox="0 0 10 7"><path d="M1.5 1.5L5.0 5.5L8.5 1.5" fill="none" stroke="#444" stroke-width="1.2"/></svg>
<div style="position:absolute;left:798.5px;top:63.8px;width:179px;height:30px;background:#fff;box-sizing:border-box;border:1px solid #8a8a8a;border-radius:5px;"></div>
<div style="position:absolute;top:72.38px;font-family:'Liberation Sans', sans-serif;font-size:14.5px;line-height:14.5px;color:#242424;white-space:nowrap;left:801.00px;transform-origin:0 0;transform:scaleX(0.9748);">General</div>
<svg style="position:absolute;left:965.3px;top:76.0px;" width="10.200000000000045" height="7.0" viewBox="0 0 10.200000000000045 7.0"><path d="M1.5 1.5L5.100000000000023 5.5L8.700000000000045 1.5" fill="none" stroke="#444" stroke-width="1.2"/></svg>
<div style="position:absolute;top:108.45px;font-family:'Liberation Sans', sans-serif;font-size:21px;line-height:21px;color:#333;white-space:nowrap;left:807.50px;transform-origin:0 0;transform:scaleX(0.8120);">$</div>
<svg style="position:absolute;left:831.2px;top:115.8px;" width="9.799999999999955" height="7.5" viewBox="0 0 9.799999999999955 7.5"><path d="M1.5 1.5L4.899999999999977 6.0L8.299999999999955 1.5" fill="none" stroke="#444" stroke-width="1.2"/></svg>
<div style="position:absolute;top:110.70px;font-family:'Liberation Sans', sans-serif;font-size:20px;line-height:20px;color:#333;white-space:nowrap;left:855.00px;transform-origin:0 0;transform:scaleX(1.0393);">%</div>
<svg style="position:absolute;left:890px;top:112px;" width="14" height="18" viewBox="0 0 14 18"><circle cx="7" cy="6.5" r="4" fill="#333"/><path d="M10.5 7c0 4-2 7-6 9" fill="none" stroke="#333" stroke-width="2.6"/></svg>
<div style="position:absolute;left:913.5px;top:105px;width:1px;height:29px;background:#d6d6d6;"></div>
<svg style="position:absolute;left:920px;top:108px;" width="22" height="22" viewBox="0 0 22 22"><path d="M2 7.2h10M5.8 3.5L2 7.2 5.8 11" fill="none" stroke="#1e88d4" stroke-width="1.4"/><text x="12.3" y="11.2" font-family="Liberation Sans" font-size="11.5" fill="#444">0</text><text x="3.5" y="20.8" font-family="Liberation Sans" font-size="11.5" fill="#444">.00</text></svg>
<svg style="position:absolute;left:951px;top:108px;" width="23" height="22" viewBox="0 0 23 22"><text x="5" y="11.2" font-family="Liberation Sans" font-size="11.5" fill="#444">.00</text><path d="M1.5 16.5h10M7.5 12.8l3.8 3.7-3.8 3.7" fill="none" stroke="#1e88d4" stroke-width="1.4"/><text x="11.5" y="20.8" font-family="Liberation Sans" font-size="11.5" fill="#444">.0</text></svg>
<svg style="position:absolute;left:1025px;top:63px;" width="38" height="30" viewBox="0 0 38 30"><rect x="1.5" y="1.5" width="34" height="26" fill="#fff" stroke="#555" stroke-width="1.6"/><rect x="8" y="1.5" width="15.5" height="8" fill="#f7a1a6" stroke="#d13438" stroke-width="1.2"/><rect x="8" y="10" width="10" height="8.5" fill="#8fc1ea" stroke="#1e73be" stroke-width="1.2"/><rect x="8" y="18.5" width="17.5" height="9" fill="#f7a1a6" stroke="#d13438" stroke-width="1.2"/><path d="M8 1.5v26M29 1.5v26M1.5 10h34M1.5 18.5h34" stroke="#555" stroke-width="1.3" fill="none"/><rect x="8" y="1.5" width="15.5" height="8" fill="#f7a1a6"/><rect x="8.6" y="10.6" width="9" height="7.4" fill="#8fc1ea"/><rect x="8.6" y="19" width="16.5" height="8" fill="#f7a1a6"/><path d="M8 1.5h15.5v8.5M18 10v8.5M25.5 18.5v9" stroke="#d13438" stroke-width="1.2" fill="none"/></svg>
<div style="position:absolute;top:103.27px;font-family:'Liberation Sans', sans-serif;font-size:14.5px;line-height:14.5px;color:#242424;white-space:nowrap;left:1005.20px;transform-origin:0 0;transform:scaleX(1.0468);">Conditional</div>
<div style="position:absolute;top:122.67px;font-family:'Liberation Sans', sans-serif;font-size:14.5px;line-height:14.5px;color:#242424;white-space:nowrap;left:1000.60px;transform-origin:0 0;transform:scaleX(1.0447);">Formatting</div>
<svg style="position:absolute;left:1076.3px;top:126.5px;" width="9.5" height="7.5" viewBox="0 0 9.5 7.5"><path d="M1.5 1.5L4.75 6.0L8.0 1.5" fill="none" stroke="#444" stroke-width="1.2"/></svg>
<svg style="position:absolute;left:1108px;top:63px;" width="41" height="36" viewBox="0 0 41 36"><rect x="1.5" y="1.5" width="35" height="26.5" fill="#fff" stroke="#555" stroke-width="1.5"/><path d="M12 1.5v26.5M24 1.5v26.5M1.5 10.5h35M1.5 19.5h35" stroke="#555" stroke-width="1.3"/><rect x="12" y="10.5" width="24.5" height="17.5" fill="#8fc1ea" stroke="#1e73be" stroke-width="1.3"/><path d="M39 12L23 28" stroke="#444" stroke-width="4.2" stroke-linecap="round"/><path d="M39 12L23 28" stroke="#fff" stroke-width="2" stroke-linecap="round"/><path d="M22 26c-4 0-6 2-6 4s-2 3-4 4c5 1 11-1 12-5z" fill="#8fc1ea" stroke="#1e73be" stroke-width="1.3"/></svg>
<div style="position:absolute;top:103.47px;font-family:'Liberation Sans', sans-serif;font-size:14.5px;line-height:14.5px;color:#242424;white-space:nowrap;left:1094.20px;transform-origin:0 0;transform:scaleX(0.9832);">Format as</div>
<div style="position:absolute;top:123.48px;font-family:'Liberation Sans', sans-serif;font-size:14.5px;line-height:14.5px;color:#242424;white-space:nowrap;left:1102.70px;transform-origin:0 0;transform:scaleX(0.9798);">Table</div>
<svg style="position:absolute;left:1140.5px;top:127.5px;" width="10" height="7" viewBox="0 0 10 7"><path d="M1.5 1.5L5.0 5.5L8.5 1.5" fill="none" stroke="#444" stroke-width="1.2"/></svg>
<svg style="position:absolute;left:1173px;top:63px;" width="41" height="36" viewBox="0 0 41 36"><rect x="1.5" y="1.5" width="35" height="26.5" fill="#fff" stroke="#555" stroke-width="1.5"/><path d="M6 1.5v26.5M31 1.5v26.5M1.5 6h35M1.5 23.5h35" stroke="#555" stroke-width="1.3"/><rect x="6" y="6" width="25" height="17.5" fill="#8fc1ea" stroke="#1e73be" stroke-width="1.3"/><path d="M39 12L23 28" stroke="#444" stroke-width="4.2" stroke-linecap="round"/><path d="M39 12L23 28" stroke="#fff" stroke-width="2" stroke-linecap="round"/><path d="M22 26c-4 0-6 2-6 4s-2 3-4 4c5 1 11-1 12-5z" fill="#8fc1ea" stroke="#1e73be" stroke-width="1.3"/></svg>
<div style="position:absolute;top:103.47px;font-family:'Liberation Sans', sans-serif;font-size:14.5px;line-height:14.5px;color:#242424;white-space:nowrap;left:1180.20px;transform-origin:0 0;transform:scaleX(0.9680);">Cell</div>
<div style="position:absolute;top:123.48px;font-family:'Liberation Sans', sans-serif;font-size:14.5px;line-height:14.5px;color:#242424;white-space:nowrap;left:1166.40px;transform-origin:0 0;transform:scaleX(0.9418);">Styles</div>
<svg style="position:absolute;left:1207.4px;top:127.5px;" width="9.699999999999818" height="7" viewBox="0 0 9.699999999999818 7"><path d="M1.5 1.5L4.849999999999909 5.5L8.199999999999818 1.5" fill="none" stroke="#444" stroke-width="1.2"/></svg>
<svg style="position:absolute;left:1246px;top:63px;" width="44" height="31" viewBox="0 0 44 31"><rect x="3.3" y="1.3" width="35.6" height="27.3" fill="#f7f7f7"/><path d="M3.3 10.1V1.3H38.9V28.6H3.3V19.4M15.3 1.3V28.6M26.8 1.3V28.6M3.3 10.1H38.9M3.3 19.4H38.9" fill="none" stroke="#555" stroke-width="1.5"/><rect x="9.3" y="10.1" width="31.4" height="9.3" fill="#8fc1ea" stroke="#1e73be" stroke-width="1.6"/><path d="M28.7 10.1v9.3" stroke="#1e73be" stroke-width="1.4"/><path d="M2.5 14.5H17" stroke="#fff" stroke-width="2.2"/><path d="M10.2 6L1.6 14.4 10.2 22.8" fill="none" stroke="#1e88d4" stroke-width="1.5"/></svg>
<div style="position:absolute;top:105.27px;font-family:'Liberation Sans', sans-serif;font-size:14.5px;line-height:14.5px;color:#242424;white-space:nowrap;left:1249.20px;transform-origin:0 0;transform:scaleX(0.9752);">Insert</div>
<svg style="position:absolute;left:1261.3px;top:127.80000000000001px;" width="10.200000000000045" height="7.699999999999989" viewBox="0 0 10.200000000000045 7.699999999999989"><path d="M1.5 1.5L5.100000000000023 6.199999999999989L8.700000000000045 1.5" fill="none" stroke="#444" stroke-width="1.2"/></svg>
<svg style="position:absolute;left:1302px;top:63px;" width="42" height="31" viewBox="0 0 42 31"><rect x="1.8" y="1.3" width="34.7" height="27.3" fill="#f7f7f7"/><path d="M1.8 10.1V1.3H36.5V6.3M36.5 26.4V28.6H1.8V19.4M13.4 1.3V28.6M25 1.3V8M25 22V28.6M1.8 10.1H6.5M1.8 19.4H6.5M25 10.1H36.5M25 19.4H36.5" fill="none" stroke="#555" stroke-width="1.5"/><path d="M6.5 10.1H22.5L27 14.75 22.5 19.4H6.5Z" fill="#8fc1ea" stroke="#1e73be" stroke-width="1.6" stroke-linejoin="round"/><path d="M18.5 10.1v9.3" stroke="#1e73be" stroke-width="1.4"/><path d="M24 8.3L37.9 22.6M37.9 8.3L24 22.6" stroke="#e03a3a" stroke-width="1.5"/></svg>
<div style="position:absolute;top:105.27px;font-family:'Liberation Sans', sans-serif;font-size:14.5px;line-height:14.5px;color:#242424;white-space:nowrap;left:1299.50px;transform-origin:0 0;transform:scaleX(1.0263);">Delete</div>
<svg style="position:absolute;left:1315.3px;top:127.80000000000001px;" width="9.700000000000045" height="7.699999999999989" viewBox="0 0 9.700000000000045 7.699999999999989"><path d="M1.5 1.5L4.850000000000023 6.199999999999989L8.200000000000045 1.5" fill="none" stroke="#444" stroke-width="1.2"/></svg>
<svg style="position:absolute;left:1356px;top:57px;" width="39" height="36" viewBox="0 0 39 36"><path d="M9.5 2.7h19.5M9.5 0.5v4.5M29 0.5v4.5" stroke="#1e88d4" stroke-width="1.4"/><rect x="1.8" y="7.5" width="34.8" height="27" fill="#f7f7f7" stroke="#555" stroke-width="1.5"/><path d="M10.7 7.5v27M27.4 7.5v27M1.8 16.6h34.8M1.8 25.4h34.8" stroke="#555" stroke-width="1.4"/><rect x="10.7" y="16.6" width="16.7" height="8.8" fill="#8fc1ea" stroke="#1e73be" stroke-width="1.6"/></svg>
<div style="position:absolute;top:103.47px;font-family:'Liberation Sans', sans-serif;font-size:14.5px;line-height:14.5px;color:#242424;white-space:nowrap;left:1351.30px;transform-origin:0 0;transform:scaleX(1.0153);">Format</div>
<svg style="position:absolute;left:1369.3px;top:126.0px;" width="9.700000000000045" height="7.5" viewBox="0 0 9.700000000000045 7.5"><path d="M1.5 1.5L4.850000000000023 6.0L8.200000000000045 1.5" fill="none" stroke="#444" stroke-width="1.2"/></svg>
<svg style="position:absolute;left:1427px;top:59px;" width="18" height="20" viewBox="0 0 18 20"><path d="M15.5 3V1.2H1.8l7 8.3-7 8.3h13.7V16" fill="none" stroke="#444" stroke-width="1.4"/></svg>
<div style="position:absolute;top:62.88px;font-family:'Liberation Sans', sans-serif;font-size:14.5px;line-height:14.5px;color:#242424;white-space:nowrap;left:1451.50px;transform-origin:0 0;transform:scaleX(1.0067);">AutoSum</div>
<svg style="position:absolute;left:1526.5px;top:66.0px;" width="10" height="7.200000000000003" viewBox="0 0 10 7.200000000000003"><path d="M1.5 1.5L5.0 5.700000000000003L8.5 1.5" fill="none" stroke="#444" stroke-width="1.2"/></svg>
<svg style="position:absolute;left:1425px;top:91px;" width="22" height="20" viewBox="0 0 22 20"><rect x="1.5" y="1.5" width="19" height="17" fill="#f5f5f5" stroke="#555" stroke-width="1.5"/><path d="M1.5 4.5h19" stroke="#555" stroke-width="1.3"/><path d="M11 7v8M7.5 11.5L11 15l3.5-3.5" fill="none" stroke="#1e88d4" stroke-width="1.4"/></svg>
<div style="position:absolute;top:94.38px;font-family:'Liberation Sans', sans-serif;font-size:14.5px;line-height:14.5px;color:#242424;white-space:nowrap;left:1451.50px;transform-origin:0 0;transform:scaleX(0.9730);">Fill</div>
<svg style="position:absolute;left:1473.5px;top:97.5px;" width="10" height="7" viewBox="0 0 10 7"><path d="M1.5 1.5L5.0 5.5L8.5 1.5" fill="none" stroke="#444" stroke-width="1.2"/></svg>
<svg style="position:absolute;left:1425px;top:122px;" width="22" height="22" viewBox="0 0 22 22"><path d="M1.3 12.8L13.4 1.4 20.3 9.7 8.3 20.5Z" fill="#fff" stroke="#9b3fb5" stroke-width="1.6" stroke-linejoin="round"/><path d="M1.3 12.8L5.3 9.1 12.2 17 8.3 20.5Z" fill="#d49be0" stroke="#9b3fb5" stroke-width="1.6" stroke-linejoin="round"/></svg>
<div style="position:absolute;top:126.17px;font-family:'Liberation Sans', sans-serif;font-size:14.5px;line-height:14.5px;color:#242424;white-space:nowrap;left:1451.50px;transform-origin:0 0;transform:scaleX(0.9654);">Clear</div>
<svg style="position:absolute;left:1488.2px;top:129.5px;" width="10.299999999999955" height="7" viewBox="0 0 10.299999999999955 7"><path d="M1.5 1.5L5.149999999999977 5.5L8.799999999999955 1.5" fill="none" stroke="#444" stroke-width="1.2"/></svg>
<div style="position:absolute;top:61.85px;font-family:'Liberation Sans', sans-serif;font-size:17px;line-height:17px;color:#1e88d4;white-space:nowrap;left:1553.40px;transform-origin:0 0;transform:scaleX(1.1053);">A</div>
<div style="position:absolute;top:79.65px;font-family:'Liberation Sans', sans-serif;font-size:17px;line-height:17px;color:#444;white-space:nowrap;left:1553.70px;transform-origin:0 0;transform:scaleX(1.0865);">Z</div>
<svg style="position:absolute;left:1567px;top:68px;" width="23" height="22" viewBox="0 0 23 22"><path d="M2 2h18.5l-7 8.5v9h-4v-9z" fill="#fff" stroke="#555" stroke-width="1.5" stroke-linejoin="round"/></svg>
<div style="position:absolute;top:103.17px;font-family:'Liberation Sans', sans-serif;font-size:14.5px;line-height:14.5px;color:#242424;white-space:nowrap;left:1549.20px;transform-origin:0 0;transform:scaleX(1.0596);">Sort &amp;</div>
<div style="position:absolute;top:123.08px;font-family:'Liberation Sans', sans-serif;font-size:14.5px;line-height:14.5px;color:#242424;white-space:nowrap;left:1547.80px;transform-origin:0 0;">Filter</div>
<svg style="position:absolute;left:1583.5px;top:126.5px;" width="10" height="7" viewBox="0 0 10 7"><path d="M1.5 1.5L5.0 5.5L8.5 1.5" fill="none" stroke="#444" stroke-width="1.2"/></svg>
<svg style="position:absolute;left:1606px;top:58px;" width="42" height="41" viewBox="0 0 42 41"><circle cx="26" cy="15.5" r="12.9" fill="#fff" stroke="#555" stroke-width="1.5"/><path d="M16.8 25.6L3.5 38.5" stroke="#555" stroke-width="1.6"/></svg>
<div style="position:absolute;top:103.17px;font-family:'Liberation Sans', sans-serif;font-size:14.5px;line-height:14.5px;color:#242424;white-space:nowrap;left:1606.60px;transform-origin:0 0;transform:scaleX(1.0263);">Find &amp;</div>
<div style="position:absolute;top:123.08px;font-family:'Liberation Sans', sans-serif;font-size:14.5px;line-height:14.5px;color:#242424;white-space:nowrap;left:1601.50px;transform-origin:0 0;transform:scaleX(0.9752);">Select</div>
<svg style="position:absolute;left:1644.5px;top:126.5px;" width="10" height="7" viewBox="0 0 10 7"><path d="M1.5 1.5L5.0 5.5L8.5 1.5" fill="none" stroke="#444" stroke-width="1.2"/></svg>
<svg style="position:absolute;left:1687px;top:59px;" width="38" height="38" viewBox="0 0 38 38"><rect x="2.4" y="2.3" width="33.4" height="33.4" fill="#fff" stroke="#d35230" stroke-width="2"/><rect x="6.4" y="6.3" width="11" height="10.8" fill="none" stroke="#d35230" stroke-width="1.8"/><rect x="20.8" y="6.3" width="11" height="10.8" fill="none" stroke="#d35230" stroke-width="1.8"/><rect x="6.4" y="20.7" width="11" height="10.8" fill="none" stroke="#d35230" stroke-width="1.8"/><rect x="20.8" y="20.7" width="11" height="10.8" fill="none" stroke="#d35230" stroke-width="1.8"/></svg>
<div style="position:absolute;top:103.47px;font-family:'Liberation Sans', sans-serif;font-size:14.5px;line-height:14.5px;color:#242424;white-space:nowrap;left:1680.00px;transform-origin:0 0;transform:scaleX(1.0569);">Add-ins</div>
<svg style="position:absolute;left:1761px;top:57px;" width="43" height="42" viewBox="0 0 43 42"><rect x="2" y="1.5" width="39" height="38.5" fill="#f5f5f5" stroke="#444" stroke-width="1.8"/><rect x="2" y="1.5" width="39" height="4.5" fill="#bdbdbd"/><path d="M2 6h39" stroke="#444" stroke-width="1.3"/><path d="M2 22h39M2 31h39M15 6v34M28 6v34" stroke="#c8c8c8" stroke-width="1.2"/><circle cx="19" cy="17" r="11" fill="#fafafa" stroke="#444" stroke-width="1.8"/><path d="M27 25l14 14" stroke="#444" stroke-width="2"/><rect x="12" y="17" width="3.5" height="6" fill="#9e9e9e"/><rect x="16.5" y="11" width="3.5" height="12" fill="#616161"/><rect x="21" y="14" width="4" height="9" fill="#1e88d4"/></svg>
<div style="position:absolute;top:103.47px;font-family:'Liberation Sans', sans-serif;font-size:14.5px;line-height:14.5px;color:#242424;white-space:nowrap;left:1756.90px;transform-origin:0 0;">Analyze</div>
<div style="position:absolute;top:123.58px;font-family:'Liberation Sans', sans-serif;font-size:14.5px;line-height:14.5px;color:#242424;white-space:nowrap;left:1767.50px;transform-origin:0 0;">Data</div>
<div style="position:absolute;left:998px;top:150px;width:235px;height:373px;background:#ffffff;box-sizing:border-box;border:1px solid #6a6a6a;border-radius:0 6px 0 6px;box-shadow:0 6px 14px rgba(0,0,0,0.18);"></div>
<div style="position:absolute;left:1232.5px;top:152px;width:233px;height:399.5px;background:#ffffff;box-sizing:border-box;border:1px solid #6a6a6a;border-radius:6px;box-shadow:0 6px 14px rgba(0,0,0,0.18);"></div>
<div style="position:absolute;left:996.4px;top:154px;width:233.5px;height:49.3px;background:#f3f3f3;box-sizing:border-box;border:4px solid #ff0000;border-radius:3px;"></div>
<div style="position:absolute;left:1231.1px;top:460.4px;width:233.4px;height:51.5px;background:#f3f3f3;box-sizing:border-box;border:4px solid #ff0000;border-radius:3px;"></div>
<div style="position:absolute;left:997px;top:50px;width:93px;height:103px;box-sizing:border-box;border:4px solid #ff0000;border-radius:3px;"></div>
<div style="position:absolute;left:68.7px;top:14.9px;width:70px;height:37.8px;box-sizing:border-box;border:4px solid #ff0000;border-radius:3px;"></div>
<div style="position:absolute;top:173.67px;font-family:'Liberation Sans', sans-serif;font-size:13.8px;line-height:13.8px;font-weight:bold;color:#1a1a1a;white-space:nowrap;left:1060.30px;transform-origin:0 0;transform:scaleX(1.0362);"><u>H</u>ighlight Cells Rules</div>
<svg style="position:absolute;left:1016.5px;top:163.5px;" width="38" height="36" viewBox="0 0 38 36"><rect x="9.5" y="9" width="16.5" height="9" fill="#fbd992" stroke="#e8820c" stroke-width="1.5"/><rect x="0.75" y="0.75" width="33.5" height="25.5" fill="none" stroke="#5a5a5a" stroke-width="1.5"/><path d="M9.5 0.75V26.25" stroke="#5a5a5a" stroke-width="1.5"/><path d="M26 0.75V26.25" stroke="#5a5a5a" stroke-width="1.5"/><path d="M0.75 9H34.25" stroke="#5a5a5a" stroke-width="1.5"/><path d="M0.75 18H34.25" stroke="#5a5a5a" stroke-width="1.5"/><rect x="16.25" y="17.25" width="20.5" height="15.5" fill="#fafafa" stroke="#5a5a5a" stroke-width="1.5"/><path d="M30 21.5l-7 3.5 7 3.5M23 31h7" fill="none" stroke="#5a5a5a" stroke-width="1.2"/></svg>
<svg style="position:absolute;left:1214px;top:170.6px;" width="9" height="14" viewBox="0 0 9 14"><path d="M1.5 1.5l6 5.5-6 5.5" fill="none" stroke="#333" stroke-width="1.2"/></svg>
<div style="position:absolute;top:225.17px;font-family:'Liberation Sans', sans-serif;font-size:13.8px;line-height:13.8px;font-weight:bold;color:#1a1a1a;white-space:nowrap;left:1060.30px;transform-origin:0 0;transform:scaleX(1.1036);"><u>T</u>op/Bottom Rules</div>
<svg style="position:absolute;left:1016.5px;top:214.5px;" width="38" height="36" viewBox="0 0 38 36"><rect x="9.5" y="0.75" width="16.5" height="25.5" fill="#fbd992" stroke="#e8820c" stroke-width="1.5"/><rect x="0.75" y="0.75" width="33.5" height="25.5" fill="none" stroke="#5a5a5a" stroke-width="1.5"/><path d="M9.5 0.75V26.25" stroke="#5a5a5a" stroke-width="1.5"/><path d="M26 0.75V26.25" stroke="#5a5a5a" stroke-width="1.5"/><path d="M0.75 9H34.25" stroke="#5a5a5a" stroke-width="1.5"/><path d="M0.75 18H34.25" stroke="#5a5a5a" stroke-width="1.5"/><path d="M17.5 14V3M12.5 8l5-5 5 5" fill="none" stroke="#444" stroke-width="1.3"/><rect x="16.25" y="17.25" width="20.5" height="15.5" fill="#fafafa" stroke="#5a5a5a" stroke-width="1.5"/><text x="26.5" y="30.5" font-family="Liberation Sans" font-size="12" text-anchor="middle" fill="#5a5a5a">10</text></svg>
<svg style="position:absolute;left:1214px;top:222.1px;" width="9" height="14" viewBox="0 0 9 14"><path d="M1.5 1.5l6 5.5-6 5.5" fill="none" stroke="#333" stroke-width="1.2"/></svg>
<div style="position:absolute;top:279.87px;font-family:'Liberation Sans', sans-serif;font-size:13.8px;line-height:13.8px;font-weight:bold;color:#1a1a1a;white-space:nowrap;left:1060.30px;transform-origin:0 0;transform:scaleX(1.0481);"><u>D</u>ata Bars</div>
<svg style="position:absolute;left:1016.5px;top:268px;" width="38" height="36" viewBox="0 0 38 36"><rect x="0.75" y="0.75" width="33.5" height="25.5" fill="#f7f7f7"/><rect x="0.75" y="0.75" width="33.5" height="25.5" fill="none" stroke="#5a5a5a" stroke-width="1.5"/><path d="M7 0.75V26.25" stroke="#5a5a5a" stroke-width="1.5"/><path d="M28 0.75V26.25" stroke="#5a5a5a" stroke-width="1.5"/><path d="M0.75 9H34.25" stroke="#5a5a5a" stroke-width="1.5"/><path d="M0.75 18H34.25" stroke="#5a5a5a" stroke-width="1.5"/><rect x="7" y="0.75" width="11" height="8.5" fill="#8fc1ea" stroke="#1e73be" stroke-width="1.5"/><rect x="7" y="9" width="4" height="9" fill="#8fc1ea" stroke="#1e73be" stroke-width="1.5"/><rect x="7" y="18" width="7.5" height="8.25" fill="#8fc1ea" stroke="#1e73be" stroke-width="1.5"/></svg>
<svg style="position:absolute;left:1214px;top:276.8px;" width="9" height="14" viewBox="0 0 9 14"><path d="M1.5 1.5l6 5.5-6 5.5" fill="none" stroke="#333" stroke-width="1.2"/></svg>
<div style="position:absolute;top:330.47px;font-family:'Liberation Sans', sans-serif;font-size:13.8px;line-height:13.8px;font-weight:bold;color:#1a1a1a;white-space:nowrap;left:1060.30px;transform-origin:0 0;transform:scaleX(0.9856);">Color <u>S</u>cales</div>
<svg style="position:absolute;left:1016.5px;top:319.5px;" width="38" height="36" viewBox="0 0 38 36"><rect x="0.75" y="0.75" width="33.5" height="25.5" fill="none" stroke="#5a5a5a" stroke-width="1.5"/><path d="M7 0.75V26.25" stroke="#5a5a5a" stroke-width="1.5"/><path d="M28 0.75V26.25" stroke="#5a5a5a" stroke-width="1.5"/><path d="M0.75 9H34.25" stroke="#5a5a5a" stroke-width="1.5"/><path d="M0.75 18H34.25" stroke="#5a5a5a" stroke-width="1.5"/><rect x="7" y="0.75" width="21" height="8.25" fill="#8fc1ea" stroke="#1e73be" stroke-width="1.5"/><rect x="7" y="9" width="21" height="9" fill="#fbd992" stroke="#e8820c" stroke-width="1.5"/><rect x="7" y="18" width="21" height="8.25" fill="#f7a1a6" stroke="#e03a3a" stroke-width="1.5"/></svg>
<svg style="position:absolute;left:1214px;top:327.4px;" width="9" height="14" viewBox="0 0 9 14"><path d="M1.5 1.5l6 5.5-6 5.5" fill="none" stroke="#333" stroke-width="1.2"/></svg>
<div style="position:absolute;top:381.07px;font-family:'Liberation Sans', sans-serif;font-size:13.8px;line-height:13.8px;font-weight:bold;color:#1a1a1a;white-space:nowrap;left:1060.30px;transform-origin:0 0;transform:scaleX(1.0147);"><u>I</u>con Sets</div>
<svg style="position:absolute;left:1016.5px;top:370px;" width="38" height="36" viewBox="0 0 38 36"><rect x="0.75" y="0.75" width="33.5" height="25.5" fill="#f7f7f7"/><rect x="0.75" y="0.75" width="33.5" height="25.5" fill="none" stroke="#5a5a5a" stroke-width="1.5"/><path d="M7 0.75V26.25" stroke="#5a5a5a" stroke-width="1.5"/><path d="M28 0.75V26.25" stroke="#5a5a5a" stroke-width="1.5"/><path d="M0.75 9H34.25" stroke="#5a5a5a" stroke-width="1.5"/><path d="M0.75 18H34.25" stroke="#5a5a5a" stroke-width="1.5"/><circle cx="10.5" cy="4.7" r="1.6" fill="#1e88e5"/><circle cx="10.5" cy="13.3" r="1.6" fill="#e53935"/><circle cx="10.5" cy="22" r="1.6" fill="#1e88e5"/><path d="M16 4.7h5M16 13.3h5M16 22h5" stroke="#777" stroke-width="1.2"/></svg>
<svg style="position:absolute;left:1214px;top:378px;" width="9" height="14" viewBox="0 0 9 14"><path d="M1.5 1.5l6 5.5-6 5.5" fill="none" stroke="#333" stroke-width="1.2"/></svg>
<div style="position:absolute;left:1055px;top:255px;width:177px;height:1px;background:#d6d6d6;"></div>
<div style="position:absolute;left:1000px;top:411px;width:232px;height:1px;background:#d6d6d6;"></div>
<div style="position:absolute;top:423.75px;font-family:'Liberation Sans', sans-serif;font-size:14.3px;line-height:14.3px;color:#262626;white-space:nowrap;left:1045.50px;transform-origin:0 0;transform:scaleX(0.9608);"><u>N</u>ew Rule...</div>
<svg style="position:absolute;left:1014.3px;top:420px;" width="22" height="22" viewBox="0 0 22 22"><rect x="0.75" y="0.75" width="18.5" height="16" fill="none" stroke="#5a5a5a" stroke-width="1.4"/><path d="M5.5 0.75v16M14.5 0.75v16M0.75 6h18.5M0.75 11.5h18.5" stroke="#5a5a5a" stroke-width="1.2"/><rect x="5.5" y="6" width="9" height="5.5" fill="#fbd992" stroke="#e8820c" stroke-width="1.4"/></svg>
<div style="position:absolute;top:459.14px;font-family:'Liberation Sans', sans-serif;font-size:14.3px;line-height:14.3px;color:#262626;white-space:nowrap;left:1045.50px;transform-origin:0 0;transform:scaleX(0.9639);"><u>C</u>lear Rules</div>
<svg style="position:absolute;left:1014.3px;top:456px;" width="22" height="22" viewBox="0 0 22 22"><rect x="0.75" y="0.75" width="18.5" height="16" fill="none" stroke="#5a5a5a" stroke-width="1.4"/><path d="M5.5 0.75v16M14.5 0.75v16M0.75 6h18.5M0.75 11.5h18.5" stroke="#5a5a5a" stroke-width="1.2"/><rect x="5.5" y="6" width="9" height="5.5" fill="#fbd992" stroke="#e8820c" stroke-width="1.4"/><path d="M6.2 12L14.7 4.5 19.7 10 11.2 17.5Z" fill="#fff" stroke="#9b3fb5" stroke-width="1.4" stroke-linejoin="round"/><path d="M6.2 12L9.2 9.4 14.2 14.9 11.2 17.5Z" fill="#d49be0" stroke="#9b3fb5" stroke-width="1.3" stroke-linejoin="round"/></svg>
<div style="position:absolute;top:495.25px;font-family:'Liberation Sans', sans-serif;font-size:14.3px;line-height:14.3px;color:#262626;white-space:nowrap;left:1045.50px;transform-origin:0 0;transform:scaleX(0.9702);">Manage <u>R</u>ules...</div>
<svg style="position:absolute;left:1014.3px;top:491px;" width="22" height="22" viewBox="0 0 22 22"><path d="M0.75 18V2.5" stroke="#888" stroke-width="1.2"/><path d="M0.75 0.75h18" stroke="#888" stroke-width="1.2"/><rect x="2.75" y="2.75" width="17" height="15.5" fill="none" stroke="#5a5a5a" stroke-width="1.4"/><path d="M7.5 2.75v15.5M14.5 2.75v15.5M2.75 7.5h17M2.75 12.5h17" stroke="#5a5a5a" stroke-width="1.2"/><rect x="7.5" y="7.5" width="7" height="5" fill="#fbd992" stroke="#e8820c" stroke-width="1.4"/></svg>
<svg style="position:absolute;left:1214px;top:457.5px;" width="9" height="14" viewBox="0 0 9 14"><path d="M1.5 1.5l6 5.5-6 5.5" fill="none" stroke="#333" stroke-width="1.2"/></svg>
<div style="position:absolute;top:173.77px;font-family:'Liberation Sans', sans-serif;font-size:13.8px;line-height:13.8px;font-weight:bold;color:#1a1a1a;white-space:nowrap;left:1294.30px;transform-origin:0 0;transform:scaleX(1.0575);"><u>G</u>reater Than...</div>
<svg style="position:absolute;left:1250.7px;top:165.5px;" width="38" height="36" viewBox="0 0 38 36"><rect x="9.5" y="9" width="16.5" height="9" fill="#fbd992" stroke="#e8820c" stroke-width="1.5"/><rect x="0.75" y="0.75" width="33.5" height="25.5" fill="none" stroke="#5a5a5a" stroke-width="1.5"/><path d="M9.5 0.75V26.25" stroke="#5a5a5a" stroke-width="1.5"/><path d="M26 0.75V26.25" stroke="#5a5a5a" stroke-width="1.5"/><path d="M0.75 9H34.25" stroke="#5a5a5a" stroke-width="1.5"/><path d="M0.75 18H34.25" stroke="#5a5a5a" stroke-width="1.5"/><rect x="15.25" y="16.75" width="20.5" height="15.5" fill="#fafafa" stroke="#5a5a5a" stroke-width="1.5"/><path d="M22 21l9 4-9 4" fill="none" stroke="#5a5a5a" stroke-width="1.2"/></svg>
<div style="position:absolute;top:224.87px;font-family:'Liberation Sans', sans-serif;font-size:13.8px;line-height:13.8px;font-weight:bold;color:#1a1a1a;white-space:nowrap;left:1294.30px;transform-origin:0 0;transform:scaleX(1.0150);"><u>L</u>ess Than...</div>
<svg style="position:absolute;left:1250.7px;top:216.5px;" width="38" height="36" viewBox="0 0 38 36"><rect x="9.5" y="9" width="16.5" height="9" fill="#fbd992" stroke="#e8820c" stroke-width="1.5"/><rect x="0.75" y="0.75" width="33.5" height="25.5" fill="none" stroke="#5a5a5a" stroke-width="1.5"/><path d="M9.5 0.75V26.25" stroke="#5a5a5a" stroke-width="1.5"/><path d="M26 0.75V26.25" stroke="#5a5a5a" stroke-width="1.5"/><path d="M0.75 9H34.25" stroke="#5a5a5a" stroke-width="1.5"/><path d="M0.75 18H34.25" stroke="#5a5a5a" stroke-width="1.5"/><rect x="15.25" y="16.75" width="20.5" height="15.5" fill="#fafafa" stroke="#5a5a5a" stroke-width="1.5"/><path d="M31 21l-9 4 9 4" fill="none" stroke="#5a5a5a" stroke-width="1.2"/></svg>
<div style="position:absolute;top:275.37px;font-family:'Liberation Sans', sans-serif;font-size:13.8px;line-height:13.8px;font-weight:bold;color:#1a1a1a;white-space:nowrap;left:1294.30px;transform-origin:0 0;transform:scaleX(1.0542);"><u>B</u>etween...</div>
<svg style="position:absolute;left:1250.7px;top:267.5px;" width="38" height="36" viewBox="0 0 38 36"><rect x="0.75" y="0.75" width="33.5" height="25.5" fill="none" stroke="#5a5a5a" stroke-width="1.5"/><path d="M9.5 0.75V26.25" stroke="#5a5a5a" stroke-width="1.5"/><path d="M26 0.75V26.25" stroke="#5a5a5a" stroke-width="1.5"/><path d="M0.75 9H34.25" stroke="#5a5a5a" stroke-width="1.5"/><path d="M0.75 18H34.25" stroke="#5a5a5a" stroke-width="1.5"/><rect x="0.75" y="0.75" width="8.75" height="8.25" fill="#8fc1ea" stroke="#1e73be" stroke-width="1.5"/><rect x="26" y="0.75" width="8.25" height="8.25" fill="#8fc1ea" stroke="#1e73be" stroke-width="1.5"/><rect x="9.5" y="9" width="16.5" height="9" fill="#fbd992" stroke="#e8820c" stroke-width="1.5"/></svg>
<div style="position:absolute;top:327.77px;font-family:'Liberation Sans', sans-serif;font-size:13.8px;line-height:13.8px;font-weight:bold;color:#1a1a1a;white-space:nowrap;left:1294.30px;transform-origin:0 0;"><u>E</u>qual To...</div>
<svg style="position:absolute;left:1250.7px;top:318.2px;" width="38" height="36" viewBox="0 0 38 36"><rect x="9.5" y="9" width="16.5" height="9" fill="#fbd992" stroke="#e8820c" stroke-width="1.5"/><rect x="0.75" y="0.75" width="33.5" height="25.5" fill="none" stroke="#5a5a5a" stroke-width="1.5"/><path d="M9.5 0.75V26.25" stroke="#5a5a5a" stroke-width="1.5"/><path d="M26 0.75V26.25" stroke="#5a5a5a" stroke-width="1.5"/><path d="M0.75 9H34.25" stroke="#5a5a5a" stroke-width="1.5"/><path d="M0.75 18H34.25" stroke="#5a5a5a" stroke-width="1.5"/><rect x="15.25" y="16.75" width="20.5" height="15.5" fill="#fafafa" stroke="#5a5a5a" stroke-width="1.5"/><path d="M21.5 23.5h10M21.5 27h10" stroke="#5a5a5a" stroke-width="1.2"/></svg>
<div style="position:absolute;top:377.97px;font-family:'Liberation Sans', sans-serif;font-size:13.8px;line-height:13.8px;font-weight:bold;color:#1a1a1a;white-space:nowrap;left:1294.30px;transform-origin:0 0;transform:scaleX(1.0695);"><u>T</u>ext that Contains...</div>
<svg style="position:absolute;left:1250.7px;top:369px;" width="38" height="36" viewBox="0 0 38 36"><rect x="9.5" y="9" width="16.5" height="9" fill="#fbd992" stroke="#e8820c" stroke-width="1.5"/><rect x="0.75" y="0.75" width="33.5" height="25.5" fill="none" stroke="#5a5a5a" stroke-width="1.5"/><path d="M9.5 0.75V26.25" stroke="#5a5a5a" stroke-width="1.5"/><path d="M26 0.75V26.25" stroke="#5a5a5a" stroke-width="1.5"/><path d="M0.75 9H34.25" stroke="#5a5a5a" stroke-width="1.5"/><path d="M0.75 18H34.25" stroke="#5a5a5a" stroke-width="1.5"/><rect x="15.25" y="16.75" width="20.5" height="15.5" fill="#fafafa" stroke="#5a5a5a" stroke-width="1.5"/><text x="25.5" y="29.5" font-family="Liberation Sans" font-size="13" text-anchor="middle" fill="#5a5a5a">a</text></svg>
<div style="position:absolute;top:428.47px;font-family:'Liberation Sans', sans-serif;font-size:13.8px;line-height:13.8px;font-weight:bold;color:#1a1a1a;white-space:nowrap;left:1294.30px;transform-origin:0 0;transform:scaleX(1.0522);"><u>A</u> Date Occurring...</div>
<svg style="position:absolute;left:1250.7px;top:420px;" width="38" height="36" viewBox="0 0 38 36"><rect x="9.5" y="9" width="16.5" height="9" fill="#fbd992" stroke="#e8820c" stroke-width="1.5"/><rect x="0.75" y="0.75" width="33.5" height="25.5" fill="none" stroke="#5a5a5a" stroke-width="1.5"/><path d="M9.5 0.75V26.25" stroke="#5a5a5a" stroke-width="1.5"/><path d="M26 0.75V26.25" stroke="#5a5a5a" stroke-width="1.5"/><path d="M0.75 9H34.25" stroke="#5a5a5a" stroke-width="1.5"/><path d="M0.75 18H34.25" stroke="#5a5a5a" stroke-width="1.5"/><rect x="15.25" y="17.75" width="20.5" height="14.5" fill="#fafafa" stroke="#5a5a5a" stroke-width="1.5"/><path d="M15.25 21.5h20.5M19 15.5v3M31 15.5v3" stroke="#5a5a5a" stroke-width="1.5"/></svg>
<div style="position:absolute;top:479.27px;font-family:'Liberation Sans', sans-serif;font-size:13.8px;line-height:13.8px;font-weight:bold;color:#1a1a1a;white-space:nowrap;left:1294.30px;transform-origin:0 0;transform:scaleX(1.0512);"><u>D</u>uplicate Values...</div>
<svg style="position:absolute;left:1250.7px;top:471px;" width="38" height="36" viewBox="0 0 38 36"><rect x="0.75" y="0.75" width="33.5" height="25.5" fill="none" stroke="#5a5a5a" stroke-width="1.5"/><path d="M9.5 0.75V26.25" stroke="#5a5a5a" stroke-width="1.5"/><path d="M26 0.75V26.25" stroke="#5a5a5a" stroke-width="1.5"/><path d="M0.75 9H34.25" stroke="#5a5a5a" stroke-width="1.5"/><path d="M0.75 18H34.25" stroke="#5a5a5a" stroke-width="1.5"/><rect x="9.5" y="0.75" width="16.5" height="8.25" fill="#fbd992" stroke="#e8820c" stroke-width="1.5"/><rect x="9.5" y="18" width="16.5" height="8.25" fill="#fbd992" stroke="#e8820c" stroke-width="1.5"/></svg>
<div style="position:absolute;top:524.25px;font-family:'Liberation Sans', sans-serif;font-size:14.3px;line-height:14.3px;color:#262626;white-space:nowrap;left:1279.30px;transform-origin:0 0;transform:scaleX(0.9671);"><u>M</u>ore Rules...</div>
</body></html>
